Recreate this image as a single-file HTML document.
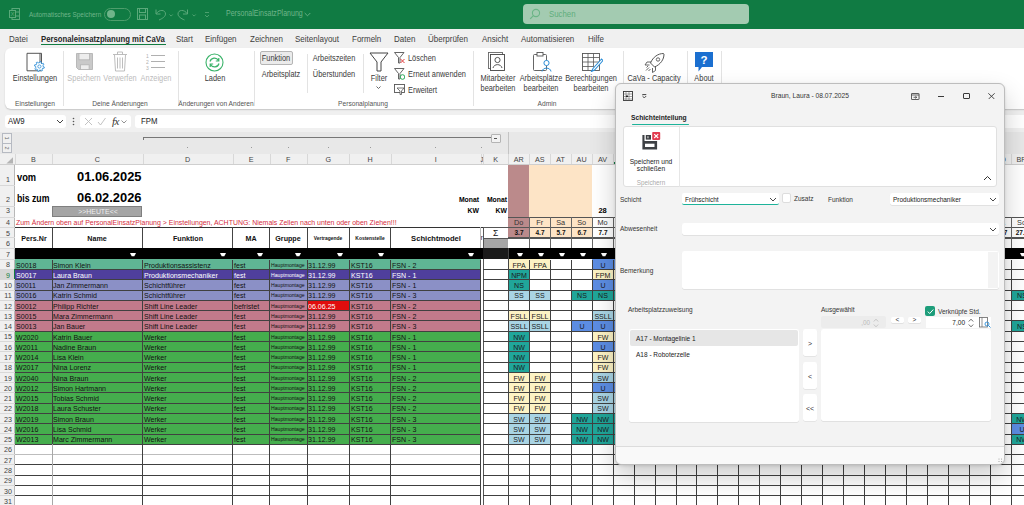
<!DOCTYPE html><html><head><meta charset="utf-8"><style>
html,body{margin:0;padding:0;width:1024px;height:505px;overflow:hidden;background:#fff;font-family:"Liberation Sans",sans-serif;}
div{box-sizing:border-box;}
</style></head><body><div style="position:relative;width:1024px;height:505px;overflow:hidden;">
<div style="position:absolute;left:0.00px;top:0.00px;width:1024.00px;height:28.60px;background:#107b43;"></div>
<div style="position:absolute;left:522.60px;top:4.20px;width:226.80px;height:19.60px;background:#a3cbb1;border-radius:4px;"></div>
<div style="position:absolute;left:548.50px;top:14.20px;white-space:nowrap;font-size:8.5px;line-height:1;color:#5fae7c;font-weight:normal;transform:translateY(-50%) scaleX(0.92);transform-origin:0 50%;">Suchen</div>
<svg style="position:absolute;left:529px;top:8px" width="12" height="12" viewBox="0 0 12 12"><circle cx="7" cy="5" r="3.6" fill="none" stroke="#6ab586" stroke-width="1.1"/><line x1="4.4" y1="7.6" x2="1.2" y2="10.8" stroke="#6ab586" stroke-width="1.2"/></svg>
<svg style="position:absolute;left:9px;top:8px" width="11" height="12" viewBox="0 0 11 12"><rect x="3" y="0.5" width="7.5" height="11" fill="none" stroke="#5aa97a" stroke-width="1"/><line x1="3" y1="4" x2="10.5" y2="4" stroke="#5aa97a"/><line x1="3" y1="8" x2="10.5" y2="8" stroke="#5aa97a"/><rect x="0.5" y="2.5" width="6" height="7" fill="#127c41" stroke="#5aa97a"/><text x="1.6" y="8.4" font-size="6" fill="#5aa97a" font-family="Liberation Sans">X</text></svg>
<div style="position:absolute;left:29.00px;top:14.00px;white-space:nowrap;font-size:7px;line-height:1;color:#6fb58a;font-weight:normal;transform:translateY(-50%) scaleX(0.91);transform-origin:0 50%;">Automatisches Speichern</div>
<div style="position:absolute;left:104.00px;top:7.50px;width:27.00px;height:13.00px;border:1px solid #4e9e6c;border-radius:7px;"></div>
<div style="position:absolute;left:106.50px;top:10.00px;width:8.00px;height:8.00px;background:#6fb58a;border-radius:50%;"></div>
<svg style="position:absolute;left:137px;top:8px" width="11" height="12" viewBox="0 0 11 12"><rect x="0.5" y="0.5" width="10" height="11" fill="none" stroke="#5aa97a"/><rect x="2.5" y="0.5" width="6" height="4" fill="none" stroke="#5aa97a"/><rect x="2.5" y="7" width="6" height="4.5" fill="none" stroke="#5aa97a"/></svg>
<svg style="position:absolute;left:154px;top:8px" width="60" height="13" viewBox="0 0 60 13"><path d="M2 1.5 V6 H6.5" fill="none" stroke="#5aa97a" stroke-width="1"/><path d="M2.3 5.7 C5 1.2 11.5 1.5 11.5 6 C11.5 8.5 8.5 10.5 5 12" fill="none" stroke="#5aa97a" stroke-width="1"/><path d="M15.5 6.5 l1.6 1.6 l1.6 -1.6" fill="none" stroke="#5aa97a" stroke-width="0.8"/><path d="M33.5 1.5 V6 H29" fill="none" stroke="#5aa97a" stroke-width="1"/><path d="M33.2 5.7 C30.5 1.2 24 1.5 24 6 C24 8.5 27 10.5 30.5 12" fill="none" stroke="#5aa97a" stroke-width="1"/><path d="M38.5 6.5 l1.6 1.6 l1.6 -1.6" fill="none" stroke="#5aa97a" stroke-width="0.8"/><path d="M51 4.5 h4 M51 7 l2 2 l2 -2" fill="none" stroke="#5aa97a" stroke-width="0.8"/></svg>
<div style="position:absolute;left:225.80px;top:14.30px;white-space:nowrap;font-size:8.2px;line-height:1;color:#6fb58a;font-weight:normal;transform:translateY(-50%) scaleX(0.86);transform-origin:0 50%;">PersonalEinsatzPlanung</div>
<svg style="position:absolute;left:304px;top:12px" width="7" height="5" viewBox="0 0 7 5"><path d="M0.7 1 l2.8 2.8 l2.8 -2.8" fill="none" stroke="#6fb58a" stroke-width="0.9"/></svg>
<div style="position:absolute;left:0.00px;top:28.60px;width:1024.00px;height:19.40px;background:#f0f0f0;"></div>
<div style="position:absolute;left:9.00px;top:38.50px;white-space:nowrap;font-size:8.6px;line-height:1;color:#3e3e3e;font-weight:normal;transform:translateY(-50%) scaleX(0.93);transform-origin:0 50%;">Datei</div>
<div style="position:absolute;left:41.00px;top:38.50px;white-space:nowrap;font-size:8.6px;line-height:1;color:#262626;font-weight:bold;transform:translateY(-50%) scaleX(0.9);transform-origin:0 50%;">Personaleinsatzplanung mit CaVa</div>
<div style="position:absolute;left:41.00px;top:43.50px;width:124.50px;height:1.40px;background:#127c41;"></div>
<div style="position:absolute;left:176.00px;top:38.50px;white-space:nowrap;font-size:8.6px;line-height:1;color:#3e3e3e;font-weight:normal;transform:translateY(-50%) scaleX(0.93);transform-origin:0 50%;">Start</div>
<div style="position:absolute;left:205.00px;top:38.50px;white-space:nowrap;font-size:8.6px;line-height:1;color:#3e3e3e;font-weight:normal;transform:translateY(-50%) scaleX(0.93);transform-origin:0 50%;">Einfügen</div>
<div style="position:absolute;left:250.00px;top:38.50px;white-space:nowrap;font-size:8.6px;line-height:1;color:#3e3e3e;font-weight:normal;transform:translateY(-50%) scaleX(0.93);transform-origin:0 50%;">Zeichnen</div>
<div style="position:absolute;left:295.00px;top:38.50px;white-space:nowrap;font-size:8.6px;line-height:1;color:#3e3e3e;font-weight:normal;transform:translateY(-50%) scaleX(0.93);transform-origin:0 50%;">Seitenlayout</div>
<div style="position:absolute;left:352.00px;top:38.50px;white-space:nowrap;font-size:8.6px;line-height:1;color:#3e3e3e;font-weight:normal;transform:translateY(-50%) scaleX(0.93);transform-origin:0 50%;">Formeln</div>
<div style="position:absolute;left:394.00px;top:38.50px;white-space:nowrap;font-size:8.6px;line-height:1;color:#3e3e3e;font-weight:normal;transform:translateY(-50%) scaleX(0.93);transform-origin:0 50%;">Daten</div>
<div style="position:absolute;left:428.00px;top:38.50px;white-space:nowrap;font-size:8.6px;line-height:1;color:#3e3e3e;font-weight:normal;transform:translateY(-50%) scaleX(0.93);transform-origin:0 50%;">Überprüfen</div>
<div style="position:absolute;left:482.00px;top:38.50px;white-space:nowrap;font-size:8.6px;line-height:1;color:#3e3e3e;font-weight:normal;transform:translateY(-50%) scaleX(0.93);transform-origin:0 50%;">Ansicht</div>
<div style="position:absolute;left:521.00px;top:38.50px;white-space:nowrap;font-size:8.6px;line-height:1;color:#3e3e3e;font-weight:normal;transform:translateY(-50%) scaleX(0.93);transform-origin:0 50%;">Automatisieren</div>
<div style="position:absolute;left:588.00px;top:38.50px;white-space:nowrap;font-size:8.6px;line-height:1;color:#3e3e3e;font-weight:normal;transform:translateY(-50%) scaleX(0.93);transform-origin:0 50%;">Hilfe</div>
<div style="position:absolute;left:0.00px;top:48.00px;width:1024.00px;height:84.50px;background:#f0f0f0;"></div>
<div style="position:absolute;left:5.00px;top:47.80px;width:1030.00px;height:61.50px;background:#fff;border-radius:6px;box-shadow:0 1px 1.5px rgba(0,0,0,0.18);"></div>
<svg style="position:absolute;left:26px;top:52px" width="20" height="20" viewBox="0 0 20 20"><path d="M1 1.3 H15.5 V18.8 H1 Z" fill="none" stroke="#444" stroke-width="0.9"/><line x1="14" y1="1.3" x2="14" y2="18.8" stroke="#444" stroke-width="0.9"/><path d="M17.10 14.50 L18.37 15.09 L18.09 16.23 L16.70 16.18 L16.02 17.12 L16.50 18.43 L15.49 19.04 L14.54 18.02 L13.40 18.20 L12.81 19.47 L11.67 19.19 L11.72 17.80 L10.78 17.12 L9.47 17.60 L8.86 16.59 L9.88 15.64 L9.70 14.50 L8.43 13.91 L8.71 12.77 L10.10 12.82 L10.78 11.88 L10.30 10.57 L11.31 9.96 L12.26 10.98 L13.40 10.80 L13.99 9.53 L15.13 9.81 L15.08 11.20 L16.02 11.88 L17.33 11.40 L17.94 12.41 L16.92 13.36 Z" fill="#fff" stroke="#2e8fd8" stroke-width="0.9"/><circle cx="13.4" cy="14.5" r="1.6" fill="none" stroke="#2e8fd8" stroke-width="0.8"/></svg>
<div style="position:absolute;left:35.00px;top:78.30px;white-space:nowrap;font-size:8.7px;line-height:1;color:#3a3a3a;font-weight:normal;transform:translate(-50%,-50%) scaleX(0.85);">Einstellungen</div>
<div style="position:absolute;left:34.50px;top:103.00px;white-space:nowrap;font-size:7px;line-height:1;color:#555;font-weight:normal;transform:translate(-50%,-50%) scaleX(0.95);">Einstellungen</div>
<div style="position:absolute;left:62.50px;top:51.00px;width:1.00px;height:55.00px;background:#e3e3e3;"></div>
<svg style="position:absolute;left:76px;top:52.5px" width="17.5" height="17.5" viewBox="0 0 17.5 17.5"><path d="M0.5 0.5 H16.5 V16.5 H2.5 L0.5 14.5 Z" fill="#c9c9c9" stroke="#b3b3b3" stroke-width="0.9"/><rect x="3" y="0.5" width="10.6" height="6.3" fill="#ededed" stroke="#b3b3b3" stroke-width="0.8"/><rect x="4.5" y="11.8" width="8.6" height="4.7" fill="#ededed" stroke="#b3b3b3" stroke-width="0.8"/></svg>
<svg style="position:absolute;left:112px;top:51px" width="16" height="21" viewBox="0 0 16 21"><path d="M1 3.5 H15 M5.5 3.5 V1 H10.5 V3.5 M2.5 4 L3.5 20 H12.5 L13.5 4 M5.5 6.5 V17.5 M8 6.5 V17.5 M10.5 6.5 V17.5" fill="none" stroke="#b5b5b5" stroke-width="0.9"/></svg>
<svg style="position:absolute;left:146px;top:53px" width="20" height="17" viewBox="0 0 20 17"><text x="0" y="5" font-size="5" fill="#b0b0b0" font-family="Liberation Sans">1</text><text x="0" y="11" font-size="5" fill="#b0b0b0" font-family="Liberation Sans">2</text><text x="0" y="17" font-size="5" fill="#b0b0b0" font-family="Liberation Sans">3</text><path d="M5 2.5 H19 M5 8.5 H19 M5 14.5 H19" stroke="#b0b0b0" stroke-width="1"/></svg>
<div style="position:absolute;left:84.00px;top:78.30px;white-space:nowrap;font-size:8.7px;line-height:1;color:#bbb;font-weight:normal;transform:translate(-50%,-50%) scaleX(0.85);">Speichern</div>
<div style="position:absolute;left:120.00px;top:78.30px;white-space:nowrap;font-size:8.7px;line-height:1;color:#bbb;font-weight:normal;transform:translate(-50%,-50%) scaleX(0.85);">Verwerfen</div>
<div style="position:absolute;left:155.50px;top:78.30px;white-space:nowrap;font-size:8.7px;line-height:1;color:#bbb;font-weight:normal;transform:translate(-50%,-50%) scaleX(0.85);">Anzeigen</div>
<div style="position:absolute;left:119.50px;top:103.00px;white-space:nowrap;font-size:7px;line-height:1;color:#555;font-weight:normal;transform:translate(-50%,-50%) scaleX(0.95);">Deine Änderungen</div>
<div style="position:absolute;left:177.50px;top:51.00px;width:1.00px;height:55.00px;background:#e3e3e3;"></div>
<svg style="position:absolute;left:205px;top:53px" width="19" height="19" viewBox="0 0 19 19"><circle cx="9.5" cy="9.5" r="8.5" fill="none" stroke="#3bb36a" stroke-width="1.1"/><path d="M5 8.5 A4.6 4.6 0 0 1 13.5 7.5 M13.8 5 V8 H10.8" fill="none" stroke="#3bb36a" stroke-width="1.2"/><path d="M14 10.5 A4.6 4.6 0 0 1 5.5 11.5 M5.2 14 V11 H8.2" fill="none" stroke="#3bb36a" stroke-width="1.2"/></svg>
<div style="position:absolute;left:215.00px;top:78.30px;white-space:nowrap;font-size:8.7px;line-height:1;color:#3a3a3a;font-weight:normal;transform:translate(-50%,-50%) scaleX(0.85);">Laden</div>
<div style="position:absolute;left:216.00px;top:103.00px;white-space:nowrap;font-size:7px;line-height:1;color:#555;font-weight:normal;transform:translate(-50%,-50%) scaleX(0.95);">Änderungen von Anderen</div>
<div style="position:absolute;left:254.00px;top:51.00px;width:1.00px;height:55.00px;background:#e3e3e3;"></div>
<div style="position:absolute;left:259.50px;top:50.50px;width:33.50px;height:14.50px;background:#ebebeb;border:1px solid #b5b5b5;border-radius:2px;"></div>
<div style="position:absolute;left:276.00px;top:57.70px;white-space:nowrap;font-size:8.7px;line-height:1;color:#3a3a3a;font-weight:normal;transform:translate(-50%,-50%) scaleX(0.85);">Funktion</div>
<div style="position:absolute;left:281.00px;top:73.80px;white-space:nowrap;font-size:8.7px;line-height:1;color:#3a3a3a;font-weight:normal;transform:translate(-50%,-50%) scaleX(0.85);">Arbeitsplatz</div>
<div style="position:absolute;left:307.00px;top:54.00px;width:1.00px;height:39.00px;background:#e3e3e3;"></div>
<div style="position:absolute;left:334.00px;top:57.70px;white-space:nowrap;font-size:8.7px;line-height:1;color:#3a3a3a;font-weight:normal;transform:translate(-50%,-50%) scaleX(0.85);">Arbeitszeiten</div>
<div style="position:absolute;left:334.00px;top:73.80px;white-space:nowrap;font-size:8.7px;line-height:1;color:#3a3a3a;font-weight:normal;transform:translate(-50%,-50%) scaleX(0.85);">Überstunden</div>
<div style="position:absolute;left:363.00px;top:54.00px;width:1.00px;height:39.00px;background:#e3e3e3;"></div>
<svg style="position:absolute;left:369px;top:52px" width="20" height="20" viewBox="0 0 20 20"><path d="M1 1 H19 L12 10 V19 H8 V10 Z" fill="none" stroke="#444" stroke-width="1"/></svg>
<div style="position:absolute;left:378.50px;top:78.20px;white-space:nowrap;font-size:8.7px;line-height:1;color:#3a3a3a;font-weight:normal;transform:translate(-50%,-50%) scaleX(0.85);">Filter</div>
<svg style="position:absolute;left:376px;top:86px" width="5" height="4" viewBox="0 0 5 4"><path d="M0.5 0.5 l2 2 l2 -2" fill="none" stroke="#555" stroke-width="0.9"/></svg>
<svg style="position:absolute;left:394px;top:52px" width="11" height="12" viewBox="0 0 11 12"><path d="M0.5 0.5 H10 L6 5.5 V11 H4.5 V5.5 Z" fill="none" stroke="#555" stroke-width="0.9"/><path d="M6.5 7 l4 4 M10.5 7 l-4 4" stroke="#e03c3c" stroke-width="1"/></svg>
<svg style="position:absolute;left:394px;top:68px" width="11" height="12" viewBox="0 0 11 12"><path d="M0.5 0.5 H10 L6 5.5 V11 H4.5 V5.5 Z" fill="none" stroke="#555" stroke-width="0.9"/><circle cx="8.5" cy="9" r="2.3" fill="none" stroke="#2aa85a" stroke-width="1"/></svg>
<svg style="position:absolute;left:394px;top:84px" width="11" height="11" viewBox="0 0 11 11"><rect x="0.5" y="0.5" width="10" height="8" fill="none" stroke="#555" stroke-width="0.9"/><path d="M3 4 H10 L7.5 7 V10.5 H6 V7 Z" fill="#fff" stroke="#555" stroke-width="0.8"/></svg>
<div style="position:absolute;left:407.60px;top:57.80px;white-space:nowrap;font-size:8.7px;line-height:1;color:#3a3a3a;font-weight:normal;transform:translateY(-50%) scaleX(0.85);transform-origin:0 50%;">Löschen</div>
<div style="position:absolute;left:407.60px;top:74.00px;white-space:nowrap;font-size:8.7px;line-height:1;color:#3a3a3a;font-weight:normal;transform:translateY(-50%) scaleX(0.85);transform-origin:0 50%;">Erneut anwenden</div>
<div style="position:absolute;left:407.60px;top:90.30px;white-space:nowrap;font-size:8.7px;line-height:1;color:#3a3a3a;font-weight:normal;transform:translateY(-50%) scaleX(0.85);transform-origin:0 50%;">Erweitert</div>
<div style="position:absolute;left:363.00px;top:103.00px;white-space:nowrap;font-size:7px;line-height:1;color:#555;font-weight:normal;transform:translate(-50%,-50%) scaleX(0.95);">Personalplanung</div>
<div style="position:absolute;left:473.00px;top:51.00px;width:1.00px;height:55.00px;background:#e3e3e3;"></div>
<svg style="position:absolute;left:488px;top:52px" width="17" height="19" viewBox="0 0 17 19"><rect x="0.5" y="0.5" width="14" height="16" fill="none" stroke="#666" stroke-width="0.9"/><rect x="2.5" y="2.5" width="14" height="16" fill="#fff" stroke="#444" stroke-width="0.9"/><circle cx="9.5" cy="8" r="2.6" fill="none" stroke="#444" stroke-width="0.9"/><path d="M5 16 C6 11.5 13 11.5 14 16" fill="none" stroke="#444" stroke-width="0.9"/></svg>
<div style="position:absolute;left:497.50px;top:78.20px;white-space:nowrap;font-size:8.7px;line-height:1;color:#3a3a3a;font-weight:normal;transform:translate(-50%,-50%) scaleX(0.85);">Mitarbeiter</div>
<div style="position:absolute;left:497.50px;top:88.00px;white-space:nowrap;font-size:8.7px;line-height:1;color:#3a3a3a;font-weight:normal;transform:translate(-50%,-50%) scaleX(0.85);">bearbeiten</div>
<svg style="position:absolute;left:533px;top:52px" width="20" height="20" viewBox="0 0 20 20"><rect x="0.5" y="2.5" width="13" height="16" rx="1" fill="none" stroke="#555" stroke-width="0.9"/><rect x="4" y="0.5" width="6" height="3.5" fill="#fff" stroke="#555" stroke-width="0.9"/><circle cx="13.5" cy="11" r="2.6" fill="#fff" stroke="#2e8fd8" stroke-width="1"/><path d="M9 19.5 C9.5 15 17.5 15 18 19.5" fill="none" stroke="#2e8fd8" stroke-width="1"/></svg>
<div style="position:absolute;left:541.00px;top:78.20px;white-space:nowrap;font-size:8.7px;line-height:1;color:#3a3a3a;font-weight:normal;transform:translate(-50%,-50%) scaleX(0.85);">Arbeitsplätze</div>
<div style="position:absolute;left:541.00px;top:88.00px;white-space:nowrap;font-size:8.7px;line-height:1;color:#3a3a3a;font-weight:normal;transform:translate(-50%,-50%) scaleX(0.85);">bearbeiten</div>
<svg style="position:absolute;left:582px;top:53px" width="21" height="19" viewBox="0 0 21 19"><rect x="0.5" y="0.5" width="17" height="17" fill="none" stroke="#555" stroke-width="0.9"/><path d="M0.5 4.5 H17.5 M0.5 9 H17.5 M0.5 13.5 H12 M6 0.5 V17.5 M11.5 0.5 V13" stroke="#555" stroke-width="0.8"/><path d="M19.5 6 L11 15.5 L9.5 18.5 L12.5 17 L21 7.5 Z" fill="#fff" stroke="#2e8fd8" stroke-width="1.1"/></svg>
<div style="position:absolute;left:591.00px;top:78.20px;white-space:nowrap;font-size:8.7px;line-height:1;color:#3a3a3a;font-weight:normal;transform:translate(-50%,-50%) scaleX(0.85);">Berechtigungen</div>
<div style="position:absolute;left:591.00px;top:88.00px;white-space:nowrap;font-size:8.7px;line-height:1;color:#3a3a3a;font-weight:normal;transform:translate(-50%,-50%) scaleX(0.85);">bearbeiten</div>
<div style="position:absolute;left:547.00px;top:103.00px;white-space:nowrap;font-size:7px;line-height:1;color:#555;font-weight:normal;transform:translate(-50%,-50%) scaleX(0.95);">Admin</div>
<div style="position:absolute;left:623.00px;top:51.00px;width:1.00px;height:55.00px;background:#e3e3e3;"></div>
<svg style="position:absolute;left:644px;top:52px" width="22" height="22" viewBox="0 0 22 22"><path d="M19.5 1.5 C14 1.5 9 5 6.5 11 L10.5 15 C16.5 12.5 20 7.5 20 2 Z" fill="none" stroke="#555" stroke-width="1"/><circle cx="14" cy="7.5" r="1.7" fill="none" stroke="#555" stroke-width="0.9"/><path d="M7 10 L3 10 L1 13 L5.5 13 M11.5 14.5 L11.5 18.5 L8.5 20.5 L8.5 16 M5 15.5 L2 18.5 M6.5 17 L4.5 19 M4 14 L2.5 15.5" fill="none" stroke="#555" stroke-width="0.9"/></svg>
<div style="position:absolute;left:654.00px;top:78.20px;white-space:nowrap;font-size:8.7px;line-height:1;color:#3a3a3a;font-weight:normal;transform:translate(-50%,-50%) scaleX(0.85);">CaVa - Capacity</div>
<div style="position:absolute;left:686.50px;top:51.00px;width:1.00px;height:55.00px;background:#e3e3e3;"></div>
<svg style="position:absolute;left:695px;top:52px" width="18" height="20" viewBox="0 0 18 20"><path d="M0 0 H18 V15 H7 L3.5 19.5 V15 H0 Z" fill="#1b6fd0"/><text x="9" y="12" font-size="11.5" font-weight="bold" fill="#fff" text-anchor="middle" font-family="Liberation Sans">?</text></svg>
<div style="position:absolute;left:704.00px;top:78.20px;white-space:nowrap;font-size:8.7px;line-height:1;color:#3a3a3a;font-weight:normal;transform:translate(-50%,-50%) scaleX(0.85);">About</div>
<div style="position:absolute;left:721.00px;top:51.00px;width:1.00px;height:55.00px;background:#e3e3e3;"></div>
<div style="position:absolute;left:5.00px;top:114.70px;width:61.00px;height:13.40px;background:#fff;border-radius:3px;"></div>
<div style="position:absolute;left:8.00px;top:121.50px;white-space:nowrap;font-size:8.2px;line-height:1;color:#222;font-weight:normal;transform:translateY(-50%) scaleX(0.95);transform-origin:0 50%;">AW9</div>
<svg style="position:absolute;left:56px;top:119px" width="8" height="5" viewBox="0 0 8 5"><path d="M1 1 l3 3 l3 -3" fill="none" stroke="#444" stroke-width="1"/></svg>
<svg style="position:absolute;left:72px;top:117px" width="3" height="10" viewBox="0 0 3 10"><circle cx="1.5" cy="1.5" r="0.8" fill="#555"/><circle cx="1.5" cy="4.5" r="0.8" fill="#555"/><circle cx="1.5" cy="7.5" r="0.8" fill="#555"/></svg>
<div style="position:absolute;left:79.80px;top:114.70px;width:51.60px;height:13.40px;background:#fff;border-radius:3px;"></div>
<svg style="position:absolute;left:84px;top:117px" width="46" height="10" viewBox="0 0 46 10"><path d="M1 1 l7 7 M8 1 l-7 7" stroke="#bbb" stroke-width="0.9"/><path d="M14 5 l2.5 3 l5 -7" fill="none" stroke="#bbb" stroke-width="0.9"/><path d="M37.5 3.5 l2.5 2.5 l2.5 -2.5" fill="none" stroke="#777" stroke-width="0.8"/></svg>
<div style="position:absolute;left:112.00px;top:121.20px;white-space:nowrap;font-size:11px;line-height:1;color:#333;font-weight:normal;transform:translateY(-50%) scaleX(1.0);transform-origin:0 50%;font-family:'Liberation Serif',serif;letter-spacing:-0.5px;"><i>fx</i></div>
<div style="position:absolute;left:135.00px;top:114.70px;width:900.00px;height:13.40px;background:#fff;border-radius:3px;"></div>
<div style="position:absolute;left:141.00px;top:121.50px;white-space:nowrap;font-size:8.2px;line-height:1;color:#222;font-weight:normal;transform:translateY(-50%) scaleX(0.95);transform-origin:0 50%;">FPM</div>
<div style="position:absolute;left:0.00px;top:132.30px;width:1024.00px;height:21.50px;background:#e8e8e8;"></div>
<div style="position:absolute;left:2.20px;top:133.10px;width:9.80px;height:19.80px;border:1px solid #b6bac2;background:#f0f0f0;"></div>
<div style="position:absolute;left:2.70px;top:142.90px;width:8.80px;height:0.90px;background:#b6bac2;"></div>
<svg style="position:absolute;left:2.2px;top:133.1px" width="10" height="20" viewBox="0 0 10 20"><text transform="translate(4.9 5) rotate(90)" x="0" y="0" font-size="5.5" fill="#666" font-family="Liberation Sans" text-anchor="middle" dominant-baseline="central">1</text><text transform="translate(4.9 15) rotate(90)" x="0" y="0" font-size="5.5" fill="#666" font-family="Liberation Sans" text-anchor="middle" dominant-baseline="central">2</text></svg>
<div style="position:absolute;left:143.00px;top:137.20px;width:348.00px;height:1.00px;background:#777;"></div>
<div style="position:absolute;left:143.00px;top:137.20px;width:1.00px;height:3.00px;background:#777;"></div>
<div style="position:absolute;left:490.50px;top:133.60px;width:10.00px;height:9.70px;border:1px solid #b4b4b4;background:#f2f2f2;border-radius:1px;"></div>
<div style="position:absolute;left:493.60px;top:138.10px;width:3.80px;height:0.80px;background:#555;"></div>
<div style="position:absolute;left:508.00px;top:132.30px;width:1.00px;height:21.50px;background:#c4c4c4;"></div>
<div style="position:absolute;left:0.00px;top:153.90px;width:1024.00px;height:11.00px;background:#f0f0f0;border-bottom:1px solid #cfcfcf;"></div>
<div style="position:absolute;left:613.05px;top:162.40px;width:20.95px;height:2.00px;background:#127c41;"></div>
<svg style="position:absolute;left:6px;top:156.5px" width="7.5" height="7" viewBox="0 0 7.5 7"><path d="M7 0.2 V6.6 H0.4 Z" fill="#b4b4b4"/></svg>
<div style="position:absolute;left:14.70px;top:153.90px;width:0.80px;height:10.50px;background:#d8d8d8;"></div>
<div style="position:absolute;left:33.50px;top:159.90px;white-space:nowrap;font-size:7.2px;line-height:1;color:#444;font-weight:normal;transform:translate(-50%,-50%) scaleX(1.0);">B</div>
<div style="position:absolute;left:52.30px;top:153.90px;width:0.80px;height:10.50px;background:#d8d8d8;"></div>
<div style="position:absolute;left:97.45px;top:159.90px;white-space:nowrap;font-size:7.2px;line-height:1;color:#444;font-weight:normal;transform:translate(-50%,-50%) scaleX(1.0);">C</div>
<div style="position:absolute;left:142.60px;top:153.90px;width:0.80px;height:10.50px;background:#d8d8d8;"></div>
<div style="position:absolute;left:187.10px;top:146.80px;width:1.00px;height:1.00px;background:#9a9a9a;"></div>
<div style="position:absolute;left:187.60px;top:159.90px;white-space:nowrap;font-size:7.2px;line-height:1;color:#444;font-weight:normal;transform:translate(-50%,-50%) scaleX(1.0);">D</div>
<div style="position:absolute;left:232.60px;top:153.90px;width:0.80px;height:10.50px;background:#d8d8d8;"></div>
<div style="position:absolute;left:250.55px;top:146.80px;width:1.00px;height:1.00px;background:#9a9a9a;"></div>
<div style="position:absolute;left:251.05px;top:159.90px;white-space:nowrap;font-size:7.2px;line-height:1;color:#444;font-weight:normal;transform:translate(-50%,-50%) scaleX(1.0);">E</div>
<div style="position:absolute;left:269.50px;top:153.90px;width:0.80px;height:10.50px;background:#d8d8d8;"></div>
<div style="position:absolute;left:287.75px;top:146.80px;width:1.00px;height:1.00px;background:#9a9a9a;"></div>
<div style="position:absolute;left:288.25px;top:159.90px;white-space:nowrap;font-size:7.2px;line-height:1;color:#444;font-weight:normal;transform:translate(-50%,-50%) scaleX(1.0);">F</div>
<div style="position:absolute;left:307.00px;top:153.90px;width:0.80px;height:10.50px;background:#d8d8d8;"></div>
<div style="position:absolute;left:327.70px;top:146.80px;width:1.00px;height:1.00px;background:#9a9a9a;"></div>
<div style="position:absolute;left:328.20px;top:159.90px;white-space:nowrap;font-size:7.2px;line-height:1;color:#444;font-weight:normal;transform:translate(-50%,-50%) scaleX(1.0);">G</div>
<div style="position:absolute;left:349.40px;top:153.90px;width:0.80px;height:10.50px;background:#d8d8d8;"></div>
<div style="position:absolute;left:369.50px;top:146.80px;width:1.00px;height:1.00px;background:#9a9a9a;"></div>
<div style="position:absolute;left:370.00px;top:159.90px;white-space:nowrap;font-size:7.2px;line-height:1;color:#444;font-weight:normal;transform:translate(-50%,-50%) scaleX(1.0);">H</div>
<div style="position:absolute;left:390.60px;top:153.90px;width:0.80px;height:10.50px;background:#d8d8d8;"></div>
<div style="position:absolute;left:435.15px;top:146.80px;width:1.00px;height:1.00px;background:#9a9a9a;"></div>
<div style="position:absolute;left:435.65px;top:159.90px;white-space:nowrap;font-size:7.2px;line-height:1;color:#444;font-weight:normal;transform:translate(-50%,-50%) scaleX(1.0);">I</div>
<div style="position:absolute;left:480.70px;top:153.90px;width:0.80px;height:10.50px;background:#d8d8d8;"></div>
<div style="position:absolute;left:481.35px;top:146.80px;width:1.00px;height:1.00px;background:#9a9a9a;"></div>
<div style="position:absolute;left:481.85px;top:159.90px;white-space:nowrap;font-size:6.5px;line-height:1;color:#444;font-weight:normal;transform:translate(-50%,-50%) scaleX(1.0);overflow:hidden;">J</div>
<div style="position:absolute;left:483.00px;top:153.90px;width:0.80px;height:10.50px;background:#d8d8d8;"></div>
<div style="position:absolute;left:495.65px;top:159.90px;white-space:nowrap;font-size:7.2px;line-height:1;color:#444;font-weight:normal;transform:translate(-50%,-50%) scaleX(1.0);">K</div>
<div style="position:absolute;left:508.30px;top:153.90px;width:0.80px;height:10.50px;background:#d8d8d8;"></div>
<div style="position:absolute;left:518.77px;top:159.90px;white-space:nowrap;font-size:7.2px;line-height:1;color:#444;font-weight:normal;transform:translate(-50%,-50%) scaleX(1.0);">AR</div>
<div style="position:absolute;left:529.25px;top:153.90px;width:0.80px;height:10.50px;background:#d8d8d8;"></div>
<div style="position:absolute;left:539.73px;top:159.90px;white-space:nowrap;font-size:7.2px;line-height:1;color:#444;font-weight:normal;transform:translate(-50%,-50%) scaleX(1.0);">AS</div>
<div style="position:absolute;left:550.20px;top:153.90px;width:0.80px;height:10.50px;background:#d8d8d8;"></div>
<div style="position:absolute;left:560.67px;top:159.90px;white-space:nowrap;font-size:7.2px;line-height:1;color:#444;font-weight:normal;transform:translate(-50%,-50%) scaleX(1.0);">AT</div>
<div style="position:absolute;left:571.15px;top:153.90px;width:0.80px;height:10.50px;background:#d8d8d8;"></div>
<div style="position:absolute;left:581.62px;top:159.90px;white-space:nowrap;font-size:7.2px;line-height:1;color:#444;font-weight:normal;transform:translate(-50%,-50%) scaleX(1.0);">AU</div>
<div style="position:absolute;left:592.10px;top:153.90px;width:0.80px;height:10.50px;background:#d8d8d8;"></div>
<div style="position:absolute;left:602.58px;top:159.90px;white-space:nowrap;font-size:7.2px;line-height:1;color:#444;font-weight:normal;transform:translate(-50%,-50%) scaleX(1.0);">AV</div>
<div style="position:absolute;left:613.05px;top:153.90px;width:0.80px;height:10.50px;background:#d8d8d8;"></div>
<div style="position:absolute;left:623.52px;top:159.90px;white-space:nowrap;font-size:7.2px;line-height:1;color:#444;font-weight:normal;transform:translate(-50%,-50%) scaleX(1.0);">AW</div>
<div style="position:absolute;left:634.00px;top:153.90px;width:0.80px;height:10.50px;background:#d8d8d8;"></div>
<div style="position:absolute;left:644.48px;top:159.90px;white-space:nowrap;font-size:7.2px;line-height:1;color:#444;font-weight:normal;transform:translate(-50%,-50%) scaleX(1.0);">AX</div>
<div style="position:absolute;left:654.95px;top:153.90px;width:0.80px;height:10.50px;background:#d8d8d8;"></div>
<div style="position:absolute;left:665.42px;top:159.90px;white-space:nowrap;font-size:7.2px;line-height:1;color:#444;font-weight:normal;transform:translate(-50%,-50%) scaleX(1.0);">AY</div>
<div style="position:absolute;left:675.90px;top:153.90px;width:0.80px;height:10.50px;background:#d8d8d8;"></div>
<div style="position:absolute;left:686.38px;top:159.90px;white-space:nowrap;font-size:7.2px;line-height:1;color:#444;font-weight:normal;transform:translate(-50%,-50%) scaleX(1.0);">AZ</div>
<div style="position:absolute;left:696.85px;top:153.90px;width:0.80px;height:10.50px;background:#d8d8d8;"></div>
<div style="position:absolute;left:707.33px;top:159.90px;white-space:nowrap;font-size:7.2px;line-height:1;color:#444;font-weight:normal;transform:translate(-50%,-50%) scaleX(1.0);">BC</div>
<div style="position:absolute;left:717.80px;top:153.90px;width:0.80px;height:10.50px;background:#d8d8d8;"></div>
<div style="position:absolute;left:728.27px;top:159.90px;white-space:nowrap;font-size:7.2px;line-height:1;color:#444;font-weight:normal;transform:translate(-50%,-50%) scaleX(1.0);">BD</div>
<div style="position:absolute;left:738.75px;top:153.90px;width:0.80px;height:10.50px;background:#d8d8d8;"></div>
<div style="position:absolute;left:749.23px;top:159.90px;white-space:nowrap;font-size:7.2px;line-height:1;color:#444;font-weight:normal;transform:translate(-50%,-50%) scaleX(1.0);">BE</div>
<div style="position:absolute;left:759.70px;top:153.90px;width:0.80px;height:10.50px;background:#d8d8d8;"></div>
<div style="position:absolute;left:770.17px;top:159.90px;white-space:nowrap;font-size:7.2px;line-height:1;color:#444;font-weight:normal;transform:translate(-50%,-50%) scaleX(1.0);">BF</div>
<div style="position:absolute;left:780.65px;top:153.90px;width:0.80px;height:10.50px;background:#d8d8d8;"></div>
<div style="position:absolute;left:791.12px;top:159.90px;white-space:nowrap;font-size:7.2px;line-height:1;color:#444;font-weight:normal;transform:translate(-50%,-50%) scaleX(1.0);">BG</div>
<div style="position:absolute;left:801.60px;top:153.90px;width:0.80px;height:10.50px;background:#d8d8d8;"></div>
<div style="position:absolute;left:812.08px;top:159.90px;white-space:nowrap;font-size:7.2px;line-height:1;color:#444;font-weight:normal;transform:translate(-50%,-50%) scaleX(1.0);">BH</div>
<div style="position:absolute;left:822.55px;top:153.90px;width:0.80px;height:10.50px;background:#d8d8d8;"></div>
<div style="position:absolute;left:833.02px;top:159.90px;white-space:nowrap;font-size:7.2px;line-height:1;color:#444;font-weight:normal;transform:translate(-50%,-50%) scaleX(1.0);">BI</div>
<div style="position:absolute;left:843.50px;top:153.90px;width:0.80px;height:10.50px;background:#d8d8d8;"></div>
<div style="position:absolute;left:853.98px;top:159.90px;white-space:nowrap;font-size:7.2px;line-height:1;color:#444;font-weight:normal;transform:translate(-50%,-50%) scaleX(1.0);">BJ</div>
<div style="position:absolute;left:864.45px;top:153.90px;width:0.80px;height:10.50px;background:#d8d8d8;"></div>
<div style="position:absolute;left:874.92px;top:159.90px;white-space:nowrap;font-size:7.2px;line-height:1;color:#444;font-weight:normal;transform:translate(-50%,-50%) scaleX(1.0);">BK</div>
<div style="position:absolute;left:885.40px;top:153.90px;width:0.80px;height:10.50px;background:#d8d8d8;"></div>
<div style="position:absolute;left:895.88px;top:159.90px;white-space:nowrap;font-size:7.2px;line-height:1;color:#444;font-weight:normal;transform:translate(-50%,-50%) scaleX(1.0);">BL</div>
<div style="position:absolute;left:906.35px;top:153.90px;width:0.80px;height:10.50px;background:#d8d8d8;"></div>
<div style="position:absolute;left:916.83px;top:159.90px;white-space:nowrap;font-size:7.2px;line-height:1;color:#444;font-weight:normal;transform:translate(-50%,-50%) scaleX(1.0);">BM</div>
<div style="position:absolute;left:927.30px;top:153.90px;width:0.80px;height:10.50px;background:#d8d8d8;"></div>
<div style="position:absolute;left:937.77px;top:159.90px;white-space:nowrap;font-size:7.2px;line-height:1;color:#444;font-weight:normal;transform:translate(-50%,-50%) scaleX(1.0);">BN</div>
<div style="position:absolute;left:948.25px;top:153.90px;width:0.80px;height:10.50px;background:#d8d8d8;"></div>
<div style="position:absolute;left:958.73px;top:159.90px;white-space:nowrap;font-size:7.2px;line-height:1;color:#444;font-weight:normal;transform:translate(-50%,-50%) scaleX(1.0);">BO</div>
<div style="position:absolute;left:969.20px;top:153.90px;width:0.80px;height:10.50px;background:#d8d8d8;"></div>
<div style="position:absolute;left:979.67px;top:159.90px;white-space:nowrap;font-size:7.2px;line-height:1;color:#444;font-weight:normal;transform:translate(-50%,-50%) scaleX(1.0);">BP</div>
<div style="position:absolute;left:990.15px;top:153.90px;width:0.80px;height:10.50px;background:#d8d8d8;"></div>
<div style="position:absolute;left:1000.62px;top:159.90px;white-space:nowrap;font-size:7.2px;line-height:1;color:#444;font-weight:normal;transform:translate(-50%,-50%) scaleX(1.0);">BQ</div>
<div style="position:absolute;left:1011.10px;top:153.90px;width:0.80px;height:10.50px;background:#d8d8d8;"></div>
<div style="position:absolute;left:1021.57px;top:159.90px;white-space:nowrap;font-size:7.2px;line-height:1;color:#444;font-weight:normal;transform:translate(-50%,-50%) scaleX(1.0);">BR</div>
<div style="position:absolute;left:1032.05px;top:153.90px;width:0.80px;height:10.50px;background:#d8d8d8;"></div>
<div style="position:absolute;left:1042.53px;top:159.90px;white-space:nowrap;font-size:7.2px;line-height:1;color:#444;font-weight:normal;transform:translate(-50%,-50%) scaleX(1.0);">BS</div>
<div style="position:absolute;left:1053.00px;top:153.90px;width:0.80px;height:10.50px;background:#d8d8d8;"></div>
<div style="position:absolute;left:1063.47px;top:159.90px;white-space:nowrap;font-size:7.2px;line-height:1;color:#444;font-weight:normal;transform:translate(-50%,-50%) scaleX(1.0);">BT</div>
<div style="position:absolute;left:1073.95px;top:153.90px;width:0.80px;height:10.50px;background:#d8d8d8;"></div>
<div style="position:absolute;left:1084.43px;top:159.90px;white-space:nowrap;font-size:7.2px;line-height:1;color:#444;font-weight:normal;transform:translate(-50%,-50%) scaleX(1.0);">BU</div>
<div style="position:absolute;left:0.00px;top:164.50px;width:14.70px;height:340.50px;background:#f0f0f0;border-right:1px solid #b8b8b8;"></div>
<div style="position:absolute;left:0.00px;top:184.80px;width:14.70px;height:0.80px;background:#d8d8d8;"></div>
<div style="position:absolute;left:7.50px;top:179.50px;white-space:nowrap;font-size:7.5px;line-height:1;color:#444;font-weight:normal;transform:translate(-50%,-50%) scaleX(0.95);">1</div>
<div style="position:absolute;left:0.00px;top:205.50px;width:14.70px;height:0.80px;background:#d8d8d8;"></div>
<div style="position:absolute;left:7.50px;top:200.25px;white-space:nowrap;font-size:7.5px;line-height:1;color:#444;font-weight:normal;transform:translate(-50%,-50%) scaleX(0.95);">2</div>
<div style="position:absolute;left:0.00px;top:216.90px;width:14.70px;height:0.80px;background:#d8d8d8;"></div>
<div style="position:absolute;left:7.50px;top:210.90px;white-space:nowrap;font-size:7.5px;line-height:1;color:#444;font-weight:normal;transform:translate(-50%,-50%) scaleX(0.95);">3</div>
<div style="position:absolute;left:0.00px;top:226.80px;width:14.70px;height:0.80px;background:#d8d8d8;"></div>
<div style="position:absolute;left:7.50px;top:223.45px;white-space:nowrap;font-size:7.5px;line-height:1;color:#444;font-weight:normal;transform:translate(-50%,-50%) scaleX(0.95);">4</div>
<div style="position:absolute;left:0.00px;top:237.40px;width:14.70px;height:0.80px;background:#d8d8d8;"></div>
<div style="position:absolute;left:7.50px;top:233.70px;white-space:nowrap;font-size:7.5px;line-height:1;color:#444;font-weight:normal;transform:translate(-50%,-50%) scaleX(0.95);">5</div>
<div style="position:absolute;left:0.00px;top:247.70px;width:14.70px;height:0.80px;background:#d8d8d8;"></div>
<div style="position:absolute;left:7.50px;top:244.15px;white-space:nowrap;font-size:7.5px;line-height:1;color:#444;font-weight:normal;transform:translate(-50%,-50%) scaleX(0.95);">6</div>
<div style="position:absolute;left:0.00px;top:258.70px;width:14.70px;height:0.80px;background:#d8d8d8;"></div>
<div style="position:absolute;left:7.50px;top:255.30px;white-space:nowrap;font-size:7.5px;line-height:1;color:#444;font-weight:normal;transform:translate(-50%,-50%) scaleX(0.95);">7</div>
<div style="position:absolute;left:0.00px;top:268.98px;width:14.70px;height:0.80px;background:#d8d8d8;"></div>
<div style="position:absolute;left:7.50px;top:265.44px;white-space:nowrap;font-size:7.5px;line-height:1;color:#444;font-weight:normal;transform:translate(-50%,-50%) scaleX(0.95);">8</div>
<div style="position:absolute;left:0.00px;top:269.48px;width:14.70px;height:10.28px;background:#d6d6d6;border-right:1.5px solid #127c41;"></div>
<div style="position:absolute;left:0.00px;top:279.26px;width:14.70px;height:0.80px;background:#d8d8d8;"></div>
<div style="position:absolute;left:7.50px;top:275.72px;white-space:nowrap;font-size:7.5px;line-height:1;color:#127c41;font-weight:normal;transform:translate(-50%,-50%) scaleX(0.95);">9</div>
<div style="position:absolute;left:0.00px;top:289.54px;width:14.70px;height:0.80px;background:#d8d8d8;"></div>
<div style="position:absolute;left:7.50px;top:286.00px;white-space:nowrap;font-size:7.5px;line-height:1;color:#444;font-weight:normal;transform:translate(-50%,-50%) scaleX(0.95);">10</div>
<div style="position:absolute;left:0.00px;top:299.82px;width:14.70px;height:0.80px;background:#d8d8d8;"></div>
<div style="position:absolute;left:7.50px;top:296.28px;white-space:nowrap;font-size:7.5px;line-height:1;color:#444;font-weight:normal;transform:translate(-50%,-50%) scaleX(0.95);">11</div>
<div style="position:absolute;left:0.00px;top:310.10px;width:14.70px;height:0.80px;background:#d8d8d8;"></div>
<div style="position:absolute;left:7.50px;top:306.56px;white-space:nowrap;font-size:7.5px;line-height:1;color:#444;font-weight:normal;transform:translate(-50%,-50%) scaleX(0.95);">12</div>
<div style="position:absolute;left:0.00px;top:320.38px;width:14.70px;height:0.80px;background:#d8d8d8;"></div>
<div style="position:absolute;left:7.50px;top:316.84px;white-space:nowrap;font-size:7.5px;line-height:1;color:#444;font-weight:normal;transform:translate(-50%,-50%) scaleX(0.95);">13</div>
<div style="position:absolute;left:0.00px;top:330.66px;width:14.70px;height:0.80px;background:#d8d8d8;"></div>
<div style="position:absolute;left:7.50px;top:327.12px;white-space:nowrap;font-size:7.5px;line-height:1;color:#444;font-weight:normal;transform:translate(-50%,-50%) scaleX(0.95);">14</div>
<div style="position:absolute;left:0.00px;top:340.94px;width:14.70px;height:0.80px;background:#d8d8d8;"></div>
<div style="position:absolute;left:7.50px;top:337.40px;white-space:nowrap;font-size:7.5px;line-height:1;color:#444;font-weight:normal;transform:translate(-50%,-50%) scaleX(0.95);">15</div>
<div style="position:absolute;left:0.00px;top:351.22px;width:14.70px;height:0.80px;background:#d8d8d8;"></div>
<div style="position:absolute;left:7.50px;top:347.68px;white-space:nowrap;font-size:7.5px;line-height:1;color:#444;font-weight:normal;transform:translate(-50%,-50%) scaleX(0.95);">16</div>
<div style="position:absolute;left:0.00px;top:361.50px;width:14.70px;height:0.80px;background:#d8d8d8;"></div>
<div style="position:absolute;left:7.50px;top:357.96px;white-space:nowrap;font-size:7.5px;line-height:1;color:#444;font-weight:normal;transform:translate(-50%,-50%) scaleX(0.95);">17</div>
<div style="position:absolute;left:0.00px;top:371.78px;width:14.70px;height:0.80px;background:#d8d8d8;"></div>
<div style="position:absolute;left:7.50px;top:368.24px;white-space:nowrap;font-size:7.5px;line-height:1;color:#444;font-weight:normal;transform:translate(-50%,-50%) scaleX(0.95);">18</div>
<div style="position:absolute;left:0.00px;top:382.06px;width:14.70px;height:0.80px;background:#d8d8d8;"></div>
<div style="position:absolute;left:7.50px;top:378.52px;white-space:nowrap;font-size:7.5px;line-height:1;color:#444;font-weight:normal;transform:translate(-50%,-50%) scaleX(0.95);">19</div>
<div style="position:absolute;left:0.00px;top:392.34px;width:14.70px;height:0.80px;background:#d8d8d8;"></div>
<div style="position:absolute;left:7.50px;top:388.80px;white-space:nowrap;font-size:7.5px;line-height:1;color:#444;font-weight:normal;transform:translate(-50%,-50%) scaleX(0.95);">20</div>
<div style="position:absolute;left:0.00px;top:402.62px;width:14.70px;height:0.80px;background:#d8d8d8;"></div>
<div style="position:absolute;left:7.50px;top:399.08px;white-space:nowrap;font-size:7.5px;line-height:1;color:#444;font-weight:normal;transform:translate(-50%,-50%) scaleX(0.95);">21</div>
<div style="position:absolute;left:0.00px;top:412.90px;width:14.70px;height:0.80px;background:#d8d8d8;"></div>
<div style="position:absolute;left:7.50px;top:409.36px;white-space:nowrap;font-size:7.5px;line-height:1;color:#444;font-weight:normal;transform:translate(-50%,-50%) scaleX(0.95);">22</div>
<div style="position:absolute;left:0.00px;top:423.18px;width:14.70px;height:0.80px;background:#d8d8d8;"></div>
<div style="position:absolute;left:7.50px;top:419.64px;white-space:nowrap;font-size:7.5px;line-height:1;color:#444;font-weight:normal;transform:translate(-50%,-50%) scaleX(0.95);">23</div>
<div style="position:absolute;left:0.00px;top:433.46px;width:14.70px;height:0.80px;background:#d8d8d8;"></div>
<div style="position:absolute;left:7.50px;top:429.92px;white-space:nowrap;font-size:7.5px;line-height:1;color:#444;font-weight:normal;transform:translate(-50%,-50%) scaleX(0.95);">24</div>
<div style="position:absolute;left:0.00px;top:443.74px;width:14.70px;height:0.80px;background:#d8d8d8;"></div>
<div style="position:absolute;left:7.50px;top:440.20px;white-space:nowrap;font-size:7.5px;line-height:1;color:#444;font-weight:normal;transform:translate(-50%,-50%) scaleX(0.95);">25</div>
<div style="position:absolute;left:0.00px;top:454.02px;width:14.70px;height:0.80px;background:#d8d8d8;"></div>
<div style="position:absolute;left:7.50px;top:450.48px;white-space:nowrap;font-size:7.5px;line-height:1;color:#444;font-weight:normal;transform:translate(-50%,-50%) scaleX(0.95);">26</div>
<div style="position:absolute;left:0.00px;top:464.30px;width:14.70px;height:0.80px;background:#d8d8d8;"></div>
<div style="position:absolute;left:7.50px;top:460.76px;white-space:nowrap;font-size:7.5px;line-height:1;color:#444;font-weight:normal;transform:translate(-50%,-50%) scaleX(0.95);">27</div>
<div style="position:absolute;left:0.00px;top:474.58px;width:14.70px;height:0.80px;background:#d8d8d8;"></div>
<div style="position:absolute;left:7.50px;top:471.04px;white-space:nowrap;font-size:7.5px;line-height:1;color:#444;font-weight:normal;transform:translate(-50%,-50%) scaleX(0.95);">28</div>
<div style="position:absolute;left:0.00px;top:484.86px;width:14.70px;height:0.80px;background:#d8d8d8;"></div>
<div style="position:absolute;left:7.50px;top:481.32px;white-space:nowrap;font-size:7.5px;line-height:1;color:#444;font-weight:normal;transform:translate(-50%,-50%) scaleX(0.95);">29</div>
<div style="position:absolute;left:0.00px;top:495.14px;width:14.70px;height:0.80px;background:#d8d8d8;"></div>
<div style="position:absolute;left:7.50px;top:491.60px;white-space:nowrap;font-size:7.5px;line-height:1;color:#444;font-weight:normal;transform:translate(-50%,-50%) scaleX(0.95);">30</div>
<div style="position:absolute;left:0.00px;top:505.42px;width:14.70px;height:0.80px;background:#d8d8d8;"></div>
<div style="position:absolute;left:7.50px;top:501.88px;white-space:nowrap;font-size:7.5px;line-height:1;color:#444;font-weight:normal;transform:translate(-50%,-50%) scaleX(0.95);">31</div>
<div style="position:absolute;left:508.30px;top:165.00px;width:20.95px;height:72.90px;background:#bb8a8b;"></div>
<div style="position:absolute;left:529.25px;top:165.00px;width:62.85px;height:62.30px;background:#fde4c6;"></div>
<div style="position:absolute;left:529.25px;top:227.30px;width:62.85px;height:10.60px;background:#fde4c6;"></div>
<div style="position:absolute;left:16.60px;top:178.20px;white-space:nowrap;font-size:10px;line-height:1;color:#000;font-weight:bold;transform:translateY(-50%) scaleX(0.93);transform-origin:0 50%;">vom</div>
<div style="position:absolute;left:76.70px;top:177.00px;white-space:nowrap;font-size:13.5px;line-height:1;color:#000;font-weight:bold;transform:translateY(-50%) scaleX(0.955);transform-origin:0 50%;">01.06.2025</div>
<div style="position:absolute;left:16.60px;top:199.20px;white-space:nowrap;font-size:10px;line-height:1;color:#000;font-weight:bold;transform:translateY(-50%) scaleX(0.87);transform-origin:0 50%;">bis zum</div>
<div style="position:absolute;left:76.70px;top:198.00px;white-space:nowrap;font-size:13.5px;line-height:1;color:#000;font-weight:bold;transform:translateY(-50%) scaleX(0.955);transform-origin:0 50%;">06.02.2026</div>
<div style="position:absolute;left:52.30px;top:206.20px;width:90.20px;height:10.70px;background:#a5a5a5;border:1px solid #7f7f7f;"></div>
<div style="position:absolute;left:97.50px;top:211.80px;white-space:nowrap;font-size:7.5px;line-height:1;color:#eee;font-weight:normal;transform:translate(-50%,-50%) scaleX(0.92);">&gt;&gt;HEUTE&lt;&lt;</div>
<div style="position:absolute;left:16.00px;top:223.00px;white-space:nowrap;font-size:7.6px;line-height:1;color:#d42c40;font-weight:normal;transform:translateY(-50%) scaleX(0.915);transform-origin:0 50%;">Zum Ändern oben auf PersonalEinsatzPlanung &gt; Einstellungen, ACHTUNG: Niemals Zellen nach unten oder oben Ziehen!!!</div>
<div style="position:absolute;left:479.00px;top:199.80px;white-space:nowrap;font-size:7.2px;line-height:1;color:#000;font-weight:bold;transform:translate(-100%,-50%) scaleX(0.95);transform-origin:100% 50%;">Monat</div>
<div style="position:absolute;left:479.00px;top:211.40px;white-space:nowrap;font-size:7.2px;line-height:1;color:#000;font-weight:bold;transform:translate(-100%,-50%) scaleX(0.95);transform-origin:100% 50%;">KW</div>
<div style="position:absolute;left:507.00px;top:199.80px;white-space:nowrap;font-size:7.2px;line-height:1;color:#000;font-weight:bold;transform:translate(-100%,-50%) scaleX(0.95);transform-origin:100% 50%;">Monat</div>
<div style="position:absolute;left:507.00px;top:211.40px;white-space:nowrap;font-size:7.2px;line-height:1;color:#000;font-weight:bold;transform:translate(-100%,-50%) scaleX(0.95);transform-origin:100% 50%;">KW</div>
<div style="position:absolute;left:602.60px;top:211.40px;white-space:nowrap;font-size:7.5px;line-height:1;color:#000;font-weight:bold;transform:translate(-50%,-50%) scaleX(1.0);">28</div>
<div style="position:absolute;left:518.77px;top:222.65px;white-space:nowrap;font-size:7.3px;line-height:1;color:#333;font-weight:normal;transform:translate(-50%,-50%) scaleX(1.0);">Do</div>
<div style="position:absolute;left:518.77px;top:232.90px;white-space:nowrap;font-size:6.8px;line-height:1;color:#111;font-weight:bold;transform:translate(-50%,-50%) scaleX(0.95);">3.7</div>
<div style="position:absolute;left:539.73px;top:222.65px;white-space:nowrap;font-size:7.3px;line-height:1;color:#333;font-weight:normal;transform:translate(-50%,-50%) scaleX(1.0);">Fr</div>
<div style="position:absolute;left:539.73px;top:232.90px;white-space:nowrap;font-size:6.8px;line-height:1;color:#111;font-weight:bold;transform:translate(-50%,-50%) scaleX(0.95);">4.7</div>
<div style="position:absolute;left:560.67px;top:222.65px;white-space:nowrap;font-size:7.3px;line-height:1;color:#333;font-weight:normal;transform:translate(-50%,-50%) scaleX(1.0);">Sa</div>
<div style="position:absolute;left:560.67px;top:232.90px;white-space:nowrap;font-size:6.8px;line-height:1;color:#111;font-weight:bold;transform:translate(-50%,-50%) scaleX(0.95);">5.7</div>
<div style="position:absolute;left:581.62px;top:222.65px;white-space:nowrap;font-size:7.3px;line-height:1;color:#333;font-weight:normal;transform:translate(-50%,-50%) scaleX(1.0);">So</div>
<div style="position:absolute;left:581.62px;top:232.90px;white-space:nowrap;font-size:6.8px;line-height:1;color:#111;font-weight:bold;transform:translate(-50%,-50%) scaleX(0.95);">6.7</div>
<div style="position:absolute;left:602.58px;top:222.65px;white-space:nowrap;font-size:7.3px;line-height:1;color:#333;font-weight:normal;transform:translate(-50%,-50%) scaleX(1.0);">Mo</div>
<div style="position:absolute;left:602.58px;top:232.90px;white-space:nowrap;font-size:6.8px;line-height:1;color:#111;font-weight:bold;transform:translate(-50%,-50%) scaleX(0.95);">7.7</div>
<div style="position:absolute;left:623.52px;top:222.65px;white-space:nowrap;font-size:7.3px;line-height:1;color:#333;font-weight:normal;transform:translate(-50%,-50%) scaleX(1.0);">Di</div>
<div style="position:absolute;left:623.52px;top:232.90px;white-space:nowrap;font-size:6.8px;line-height:1;color:#111;font-weight:bold;transform:translate(-50%,-50%) scaleX(0.95);">8.7</div>
<div style="position:absolute;left:644.48px;top:222.65px;white-space:nowrap;font-size:7.3px;line-height:1;color:#333;font-weight:normal;transform:translate(-50%,-50%) scaleX(1.0);">Mi</div>
<div style="position:absolute;left:644.48px;top:232.90px;white-space:nowrap;font-size:6.8px;line-height:1;color:#111;font-weight:bold;transform:translate(-50%,-50%) scaleX(0.95);">9.7</div>
<div style="position:absolute;left:665.42px;top:222.65px;white-space:nowrap;font-size:7.3px;line-height:1;color:#333;font-weight:normal;transform:translate(-50%,-50%) scaleX(1.0);">Do</div>
<div style="position:absolute;left:665.42px;top:232.90px;white-space:nowrap;font-size:6.8px;line-height:1;color:#111;font-weight:bold;transform:translate(-50%,-50%) scaleX(0.95);">10.7</div>
<div style="position:absolute;left:686.38px;top:222.65px;white-space:nowrap;font-size:7.3px;line-height:1;color:#333;font-weight:normal;transform:translate(-50%,-50%) scaleX(1.0);">Fr</div>
<div style="position:absolute;left:686.38px;top:232.90px;white-space:nowrap;font-size:6.8px;line-height:1;color:#111;font-weight:bold;transform:translate(-50%,-50%) scaleX(0.95);">11.7</div>
<div style="position:absolute;left:707.33px;top:222.65px;white-space:nowrap;font-size:7.3px;line-height:1;color:#333;font-weight:normal;transform:translate(-50%,-50%) scaleX(1.0);">Sa</div>
<div style="position:absolute;left:707.33px;top:232.90px;white-space:nowrap;font-size:6.8px;line-height:1;color:#111;font-weight:bold;transform:translate(-50%,-50%) scaleX(0.95);">12.7</div>
<div style="position:absolute;left:728.27px;top:222.65px;white-space:nowrap;font-size:7.3px;line-height:1;color:#333;font-weight:normal;transform:translate(-50%,-50%) scaleX(1.0);">So</div>
<div style="position:absolute;left:728.27px;top:232.90px;white-space:nowrap;font-size:6.8px;line-height:1;color:#111;font-weight:bold;transform:translate(-50%,-50%) scaleX(0.95);">13.7</div>
<div style="position:absolute;left:749.23px;top:222.65px;white-space:nowrap;font-size:7.3px;line-height:1;color:#333;font-weight:normal;transform:translate(-50%,-50%) scaleX(1.0);">Mo</div>
<div style="position:absolute;left:749.23px;top:232.90px;white-space:nowrap;font-size:6.8px;line-height:1;color:#111;font-weight:bold;transform:translate(-50%,-50%) scaleX(0.95);">14.7</div>
<div style="position:absolute;left:770.17px;top:222.65px;white-space:nowrap;font-size:7.3px;line-height:1;color:#333;font-weight:normal;transform:translate(-50%,-50%) scaleX(1.0);">Di</div>
<div style="position:absolute;left:770.17px;top:232.90px;white-space:nowrap;font-size:6.8px;line-height:1;color:#111;font-weight:bold;transform:translate(-50%,-50%) scaleX(0.95);">15.7</div>
<div style="position:absolute;left:791.12px;top:222.65px;white-space:nowrap;font-size:7.3px;line-height:1;color:#333;font-weight:normal;transform:translate(-50%,-50%) scaleX(1.0);">Mi</div>
<div style="position:absolute;left:791.12px;top:232.90px;white-space:nowrap;font-size:6.8px;line-height:1;color:#111;font-weight:bold;transform:translate(-50%,-50%) scaleX(0.95);">16.7</div>
<div style="position:absolute;left:812.08px;top:222.65px;white-space:nowrap;font-size:7.3px;line-height:1;color:#333;font-weight:normal;transform:translate(-50%,-50%) scaleX(1.0);">Do</div>
<div style="position:absolute;left:812.08px;top:232.90px;white-space:nowrap;font-size:6.8px;line-height:1;color:#111;font-weight:bold;transform:translate(-50%,-50%) scaleX(0.95);">17.7</div>
<div style="position:absolute;left:833.02px;top:222.65px;white-space:nowrap;font-size:7.3px;line-height:1;color:#333;font-weight:normal;transform:translate(-50%,-50%) scaleX(1.0);">Fr</div>
<div style="position:absolute;left:833.02px;top:232.90px;white-space:nowrap;font-size:6.8px;line-height:1;color:#111;font-weight:bold;transform:translate(-50%,-50%) scaleX(0.95);">18.7</div>
<div style="position:absolute;left:853.98px;top:222.65px;white-space:nowrap;font-size:7.3px;line-height:1;color:#333;font-weight:normal;transform:translate(-50%,-50%) scaleX(1.0);">Sa</div>
<div style="position:absolute;left:853.98px;top:232.90px;white-space:nowrap;font-size:6.8px;line-height:1;color:#111;font-weight:bold;transform:translate(-50%,-50%) scaleX(0.95);">19.7</div>
<div style="position:absolute;left:874.92px;top:222.65px;white-space:nowrap;font-size:7.3px;line-height:1;color:#333;font-weight:normal;transform:translate(-50%,-50%) scaleX(1.0);">So</div>
<div style="position:absolute;left:874.92px;top:232.90px;white-space:nowrap;font-size:6.8px;line-height:1;color:#111;font-weight:bold;transform:translate(-50%,-50%) scaleX(0.95);">20.7</div>
<div style="position:absolute;left:895.88px;top:222.65px;white-space:nowrap;font-size:7.3px;line-height:1;color:#333;font-weight:normal;transform:translate(-50%,-50%) scaleX(1.0);">Mo</div>
<div style="position:absolute;left:895.88px;top:232.90px;white-space:nowrap;font-size:6.8px;line-height:1;color:#111;font-weight:bold;transform:translate(-50%,-50%) scaleX(0.95);">21.7</div>
<div style="position:absolute;left:916.83px;top:222.65px;white-space:nowrap;font-size:7.3px;line-height:1;color:#333;font-weight:normal;transform:translate(-50%,-50%) scaleX(1.0);">Di</div>
<div style="position:absolute;left:916.83px;top:232.90px;white-space:nowrap;font-size:6.8px;line-height:1;color:#111;font-weight:bold;transform:translate(-50%,-50%) scaleX(0.95);">22.7</div>
<div style="position:absolute;left:937.77px;top:222.65px;white-space:nowrap;font-size:7.3px;line-height:1;color:#333;font-weight:normal;transform:translate(-50%,-50%) scaleX(1.0);">Mi</div>
<div style="position:absolute;left:937.77px;top:232.90px;white-space:nowrap;font-size:6.8px;line-height:1;color:#111;font-weight:bold;transform:translate(-50%,-50%) scaleX(0.95);">23.7</div>
<div style="position:absolute;left:958.73px;top:222.65px;white-space:nowrap;font-size:7.3px;line-height:1;color:#333;font-weight:normal;transform:translate(-50%,-50%) scaleX(1.0);">Do</div>
<div style="position:absolute;left:958.73px;top:232.90px;white-space:nowrap;font-size:6.8px;line-height:1;color:#111;font-weight:bold;transform:translate(-50%,-50%) scaleX(0.95);">24.7</div>
<div style="position:absolute;left:979.67px;top:222.65px;white-space:nowrap;font-size:7.3px;line-height:1;color:#333;font-weight:normal;transform:translate(-50%,-50%) scaleX(1.0);">Fr</div>
<div style="position:absolute;left:979.67px;top:232.90px;white-space:nowrap;font-size:6.8px;line-height:1;color:#111;font-weight:bold;transform:translate(-50%,-50%) scaleX(0.95);">25.7</div>
<div style="position:absolute;left:1000.62px;top:222.65px;white-space:nowrap;font-size:7.3px;line-height:1;color:#333;font-weight:normal;transform:translate(-50%,-50%) scaleX(1.0);">Sa</div>
<div style="position:absolute;left:1000.62px;top:232.90px;white-space:nowrap;font-size:6.8px;line-height:1;color:#111;font-weight:bold;transform:translate(-50%,-50%) scaleX(0.95);">26.7</div>
<div style="position:absolute;left:1021.57px;top:222.65px;white-space:nowrap;font-size:7.3px;line-height:1;color:#333;font-weight:normal;transform:translate(-50%,-50%) scaleX(1.0);">So</div>
<div style="position:absolute;left:1021.57px;top:232.90px;white-space:nowrap;font-size:6.8px;line-height:1;color:#111;font-weight:bold;transform:translate(-50%,-50%) scaleX(0.95);">27.7</div>
<div style="position:absolute;left:1042.53px;top:222.65px;white-space:nowrap;font-size:7.3px;line-height:1;color:#333;font-weight:normal;transform:translate(-50%,-50%) scaleX(1.0);">Mo</div>
<div style="position:absolute;left:1042.53px;top:232.90px;white-space:nowrap;font-size:6.8px;line-height:1;color:#111;font-weight:bold;transform:translate(-50%,-50%) scaleX(0.95);">28.7</div>
<div style="position:absolute;left:1063.47px;top:222.65px;white-space:nowrap;font-size:7.3px;line-height:1;color:#333;font-weight:normal;transform:translate(-50%,-50%) scaleX(1.0);">Di</div>
<div style="position:absolute;left:1063.47px;top:232.90px;white-space:nowrap;font-size:6.8px;line-height:1;color:#111;font-weight:bold;transform:translate(-50%,-50%) scaleX(0.95);">29.7</div>
<div style="position:absolute;left:1084.43px;top:222.65px;white-space:nowrap;font-size:7.3px;line-height:1;color:#333;font-weight:normal;transform:translate(-50%,-50%) scaleX(1.0);">Mi</div>
<div style="position:absolute;left:1084.43px;top:232.90px;white-space:nowrap;font-size:6.8px;line-height:1;color:#111;font-weight:bold;transform:translate(-50%,-50%) scaleX(0.95);">30.7</div>
<div style="position:absolute;left:508.30px;top:217.00px;width:515.70px;height:0.80px;background:#555;"></div>
<div style="position:absolute;left:508.30px;top:226.90px;width:515.70px;height:0.80px;background:#555;"></div>
<div style="position:absolute;left:508.30px;top:237.10px;width:515.70px;height:1.60px;background:#555;"></div>
<div style="position:absolute;left:508.30px;top:247.80px;width:515.70px;height:0.80px;background:#555;"></div>
<div style="position:absolute;left:528.85px;top:217.40px;width:0.80px;height:30.80px;background:#666;"></div>
<div style="position:absolute;left:549.80px;top:217.40px;width:0.80px;height:30.80px;background:#666;"></div>
<div style="position:absolute;left:570.75px;top:217.40px;width:0.80px;height:30.80px;background:#666;"></div>
<div style="position:absolute;left:591.70px;top:217.40px;width:0.80px;height:30.80px;background:#666;"></div>
<div style="position:absolute;left:612.65px;top:217.40px;width:0.80px;height:30.80px;background:#666;"></div>
<div style="position:absolute;left:633.60px;top:217.40px;width:0.80px;height:30.80px;background:#666;"></div>
<div style="position:absolute;left:654.55px;top:217.40px;width:0.80px;height:30.80px;background:#666;"></div>
<div style="position:absolute;left:675.50px;top:217.40px;width:0.80px;height:30.80px;background:#666;"></div>
<div style="position:absolute;left:696.45px;top:217.40px;width:0.80px;height:30.80px;background:#666;"></div>
<div style="position:absolute;left:717.40px;top:217.40px;width:0.80px;height:30.80px;background:#666;"></div>
<div style="position:absolute;left:738.35px;top:217.40px;width:0.80px;height:30.80px;background:#666;"></div>
<div style="position:absolute;left:759.30px;top:217.40px;width:0.80px;height:30.80px;background:#666;"></div>
<div style="position:absolute;left:780.25px;top:217.40px;width:0.80px;height:30.80px;background:#666;"></div>
<div style="position:absolute;left:801.20px;top:217.40px;width:0.80px;height:30.80px;background:#666;"></div>
<div style="position:absolute;left:822.15px;top:217.40px;width:0.80px;height:30.80px;background:#666;"></div>
<div style="position:absolute;left:843.10px;top:217.40px;width:0.80px;height:30.80px;background:#666;"></div>
<div style="position:absolute;left:864.05px;top:217.40px;width:0.80px;height:30.80px;background:#666;"></div>
<div style="position:absolute;left:885.00px;top:217.40px;width:0.80px;height:30.80px;background:#666;"></div>
<div style="position:absolute;left:905.95px;top:217.40px;width:0.80px;height:30.80px;background:#666;"></div>
<div style="position:absolute;left:926.90px;top:217.40px;width:0.80px;height:30.80px;background:#666;"></div>
<div style="position:absolute;left:947.85px;top:217.40px;width:0.80px;height:30.80px;background:#666;"></div>
<div style="position:absolute;left:968.80px;top:217.40px;width:0.80px;height:30.80px;background:#666;"></div>
<div style="position:absolute;left:989.75px;top:217.40px;width:0.80px;height:30.80px;background:#666;"></div>
<div style="position:absolute;left:1010.70px;top:217.40px;width:0.80px;height:30.80px;background:#666;"></div>
<div style="position:absolute;left:1031.65px;top:217.40px;width:0.80px;height:30.80px;background:#666;"></div>
<div style="position:absolute;left:1052.60px;top:217.40px;width:0.80px;height:30.80px;background:#666;"></div>
<div style="position:absolute;left:1073.55px;top:217.40px;width:0.80px;height:30.80px;background:#666;"></div>
<div style="position:absolute;left:1094.50px;top:217.40px;width:0.80px;height:30.80px;background:#666;"></div>
<div style="position:absolute;left:495.65px;top:233.10px;white-space:nowrap;font-size:8.5px;line-height:1;color:#111;font-weight:normal;transform:translate(-50%,-50%) scaleX(1.0);">Σ</div>
<div style="position:absolute;left:483.00px;top:237.90px;width:25.30px;height:10.30px;background:#a6a6a6;"></div>
<div style="position:absolute;left:483.00px;top:226.90px;width:25.30px;height:0.80px;background:#555;"></div>
<div style="position:absolute;left:483.00px;top:237.50px;width:25.30px;height:0.80px;background:#555;"></div>
<div style="position:absolute;left:33.50px;top:238.80px;white-space:nowrap;font-size:7.5px;line-height:1;color:#111;font-weight:bold;transform:translate(-50%,-50%) scaleX(0.95);">Pers.Nr</div>
<div style="position:absolute;left:97.45px;top:238.80px;white-space:nowrap;font-size:7.5px;line-height:1;color:#111;font-weight:bold;transform:translate(-50%,-50%) scaleX(0.95);">Name</div>
<div style="position:absolute;left:187.60px;top:238.80px;white-space:nowrap;font-size:7.5px;line-height:1;color:#111;font-weight:bold;transform:translate(-50%,-50%) scaleX(0.95);">Funktion</div>
<div style="position:absolute;left:251.05px;top:238.80px;white-space:nowrap;font-size:7.5px;line-height:1;color:#111;font-weight:bold;transform:translate(-50%,-50%) scaleX(0.95);">MA</div>
<div style="position:absolute;left:288.25px;top:238.80px;white-space:nowrap;font-size:7.5px;line-height:1;color:#111;font-weight:bold;transform:translate(-50%,-50%) scaleX(0.95);">Gruppe</div>
<div style="position:absolute;left:328.20px;top:238.80px;white-space:nowrap;font-size:5.2px;line-height:1;color:#111;font-weight:bold;transform:translate(-50%,-50%) scaleX(0.95);">Vertragende</div>
<div style="position:absolute;left:370.00px;top:238.80px;white-space:nowrap;font-size:5.2px;line-height:1;color:#111;font-weight:bold;transform:translate(-50%,-50%) scaleX(0.95);">Kostenstelle</div>
<div style="position:absolute;left:435.65px;top:238.80px;white-space:nowrap;font-size:8px;line-height:1;color:#111;font-weight:bold;transform:translate(-50%,-50%) scaleX(0.95);">Schichtmodel</div>
<div style="position:absolute;left:14.70px;top:226.80px;width:468.30px;height:0.90px;background:#333;"></div>
<div style="position:absolute;left:51.80px;top:227.30px;width:0.90px;height:20.90px;background:#444;"></div>
<div style="position:absolute;left:142.10px;top:227.30px;width:0.90px;height:20.90px;background:#444;"></div>
<div style="position:absolute;left:232.10px;top:227.30px;width:0.90px;height:20.90px;background:#444;"></div>
<div style="position:absolute;left:269.00px;top:227.30px;width:0.90px;height:20.90px;background:#444;"></div>
<div style="position:absolute;left:306.50px;top:227.30px;width:0.90px;height:20.90px;background:#444;"></div>
<div style="position:absolute;left:348.90px;top:227.30px;width:0.90px;height:20.90px;background:#444;"></div>
<div style="position:absolute;left:390.10px;top:227.30px;width:0.90px;height:20.90px;background:#444;"></div>
<div style="position:absolute;left:480.20px;top:227.30px;width:0.90px;height:20.90px;background:#444;"></div>
<div style="position:absolute;left:480.30px;top:227.30px;width:0.80px;height:277.70px;background:#b8b8b8;"></div>
<div style="position:absolute;left:482.90px;top:227.30px;width:0.80px;height:277.70px;background:#555;"></div>
<div style="position:absolute;left:481.80px;top:238.00px;white-space:nowrap;font-size:6.5px;line-height:1;color:#111;font-weight:normal;transform:translate(-50%,-50%) scaleX(1.0);overflow:hidden;">r</div>
<div style="position:absolute;left:14.70px;top:248.20px;width:1009.30px;height:11.00px;background:#000;"></div>
<div style="position:absolute;left:483.00px;top:248.20px;width:25.30px;height:11.00px;background:#1a1a1a;"></div>
<svg style="position:absolute;left:130.30px;top:252.6px" width="6" height="4" viewBox="0 0 6 4"><path d="M0 0 H6 L4.3 3.3 H1.7 Z" fill="#fff"/></svg>
<svg style="position:absolute;left:220.30px;top:252.6px" width="6" height="4" viewBox="0 0 6 4"><path d="M0 0 H6 L4.3 3.3 H1.7 Z" fill="#fff"/></svg>
<svg style="position:absolute;left:257.20px;top:252.6px" width="6" height="4" viewBox="0 0 6 4"><path d="M0 0 H6 L4.3 3.3 H1.7 Z" fill="#fff"/></svg>
<svg style="position:absolute;left:294.70px;top:252.6px" width="6" height="4" viewBox="0 0 6 4"><path d="M0 0 H6 L4.3 3.3 H1.7 Z" fill="#fff"/></svg>
<svg style="position:absolute;left:337.10px;top:252.6px" width="6" height="4" viewBox="0 0 6 4"><path d="M0 0 H6 L4.3 3.3 H1.7 Z" fill="#fff"/></svg>
<svg style="position:absolute;left:378.30px;top:252.6px" width="6" height="4" viewBox="0 0 6 4"><path d="M0 0 H6 L4.3 3.3 H1.7 Z" fill="#fff"/></svg>
<svg style="position:absolute;left:468.40px;top:252.6px" width="6" height="4" viewBox="0 0 6 4"><path d="M0 0 H6 L4.3 3.3 H1.7 Z" fill="#fff"/></svg>
<svg style="position:absolute;left:516.95px;top:252.6px" width="6" height="4" viewBox="0 0 6 4"><path d="M0 0 H6 L4.3 3.3 H1.7 Z" fill="#fff"/></svg>
<svg style="position:absolute;left:537.90px;top:252.6px" width="6" height="4" viewBox="0 0 6 4"><path d="M0 0 H6 L4.3 3.3 H1.7 Z" fill="#fff"/></svg>
<svg style="position:absolute;left:558.85px;top:252.6px" width="6" height="4" viewBox="0 0 6 4"><path d="M0 0 H6 L4.3 3.3 H1.7 Z" fill="#fff"/></svg>
<svg style="position:absolute;left:579.80px;top:252.6px" width="6" height="4" viewBox="0 0 6 4"><path d="M0 0 H6 L4.3 3.3 H1.7 Z" fill="#fff"/></svg>
<svg style="position:absolute;left:600.75px;top:252.6px" width="6" height="4" viewBox="0 0 6 4"><path d="M0 0 H6 L4.3 3.3 H1.7 Z" fill="#fff"/></svg>
<svg style="position:absolute;left:621.70px;top:252.6px" width="6" height="4" viewBox="0 0 6 4"><path d="M0 0 H6 L4.3 3.3 H1.7 Z" fill="#fff"/></svg>
<svg style="position:absolute;left:642.65px;top:252.6px" width="6" height="4" viewBox="0 0 6 4"><path d="M0 0 H6 L4.3 3.3 H1.7 Z" fill="#fff"/></svg>
<svg style="position:absolute;left:663.60px;top:252.6px" width="6" height="4" viewBox="0 0 6 4"><path d="M0 0 H6 L4.3 3.3 H1.7 Z" fill="#fff"/></svg>
<svg style="position:absolute;left:684.55px;top:252.6px" width="6" height="4" viewBox="0 0 6 4"><path d="M0 0 H6 L4.3 3.3 H1.7 Z" fill="#fff"/></svg>
<svg style="position:absolute;left:705.50px;top:252.6px" width="6" height="4" viewBox="0 0 6 4"><path d="M0 0 H6 L4.3 3.3 H1.7 Z" fill="#fff"/></svg>
<svg style="position:absolute;left:726.45px;top:252.6px" width="6" height="4" viewBox="0 0 6 4"><path d="M0 0 H6 L4.3 3.3 H1.7 Z" fill="#fff"/></svg>
<svg style="position:absolute;left:747.40px;top:252.6px" width="6" height="4" viewBox="0 0 6 4"><path d="M0 0 H6 L4.3 3.3 H1.7 Z" fill="#fff"/></svg>
<svg style="position:absolute;left:768.35px;top:252.6px" width="6" height="4" viewBox="0 0 6 4"><path d="M0 0 H6 L4.3 3.3 H1.7 Z" fill="#fff"/></svg>
<svg style="position:absolute;left:789.30px;top:252.6px" width="6" height="4" viewBox="0 0 6 4"><path d="M0 0 H6 L4.3 3.3 H1.7 Z" fill="#fff"/></svg>
<svg style="position:absolute;left:810.25px;top:252.6px" width="6" height="4" viewBox="0 0 6 4"><path d="M0 0 H6 L4.3 3.3 H1.7 Z" fill="#fff"/></svg>
<svg style="position:absolute;left:831.20px;top:252.6px" width="6" height="4" viewBox="0 0 6 4"><path d="M0 0 H6 L4.3 3.3 H1.7 Z" fill="#fff"/></svg>
<svg style="position:absolute;left:852.15px;top:252.6px" width="6" height="4" viewBox="0 0 6 4"><path d="M0 0 H6 L4.3 3.3 H1.7 Z" fill="#fff"/></svg>
<svg style="position:absolute;left:873.10px;top:252.6px" width="6" height="4" viewBox="0 0 6 4"><path d="M0 0 H6 L4.3 3.3 H1.7 Z" fill="#fff"/></svg>
<svg style="position:absolute;left:894.05px;top:252.6px" width="6" height="4" viewBox="0 0 6 4"><path d="M0 0 H6 L4.3 3.3 H1.7 Z" fill="#fff"/></svg>
<svg style="position:absolute;left:915.00px;top:252.6px" width="6" height="4" viewBox="0 0 6 4"><path d="M0 0 H6 L4.3 3.3 H1.7 Z" fill="#fff"/></svg>
<svg style="position:absolute;left:935.95px;top:252.6px" width="6" height="4" viewBox="0 0 6 4"><path d="M0 0 H6 L4.3 3.3 H1.7 Z" fill="#fff"/></svg>
<svg style="position:absolute;left:956.90px;top:252.6px" width="6" height="4" viewBox="0 0 6 4"><path d="M0 0 H6 L4.3 3.3 H1.7 Z" fill="#fff"/></svg>
<svg style="position:absolute;left:977.85px;top:252.6px" width="6" height="4" viewBox="0 0 6 4"><path d="M0 0 H6 L4.3 3.3 H1.7 Z" fill="#fff"/></svg>
<svg style="position:absolute;left:998.80px;top:252.6px" width="6" height="4" viewBox="0 0 6 4"><path d="M0 0 H6 L4.3 3.3 H1.7 Z" fill="#fff"/></svg>
<svg style="position:absolute;left:1019.75px;top:252.6px" width="6" height="4" viewBox="0 0 6 4"><path d="M0 0 H6 L4.3 3.3 H1.7 Z" fill="#fff"/></svg>
<svg style="position:absolute;left:1040.70px;top:252.6px" width="6" height="4" viewBox="0 0 6 4"><path d="M0 0 H6 L4.3 3.3 H1.7 Z" fill="#fff"/></svg>
<svg style="position:absolute;left:1061.65px;top:252.6px" width="6" height="4" viewBox="0 0 6 4"><path d="M0 0 H6 L4.3 3.3 H1.7 Z" fill="#fff"/></svg>
<svg style="position:absolute;left:1082.60px;top:252.6px" width="6" height="4" viewBox="0 0 6 4"><path d="M0 0 H6 L4.3 3.3 H1.7 Z" fill="#fff"/></svg>
<div style="position:absolute;left:14.70px;top:259.20px;width:466.00px;height:10.28px;background:#5fb594;"></div>
<div style="position:absolute;left:15.50px;top:265.54px;white-space:nowrap;font-size:7.6px;line-height:1;color:#111;font-weight:normal;transform:translateY(-50%) scaleX(0.93);transform-origin:0 50%;">S0018</div>
<div style="position:absolute;left:53.00px;top:265.54px;white-space:nowrap;font-size:7.6px;line-height:1;color:#111;font-weight:normal;transform:translateY(-50%) scaleX(0.93);transform-origin:0 50%;">Simon Klein</div>
<div style="position:absolute;left:143.50px;top:265.54px;white-space:nowrap;font-size:7.6px;line-height:1;color:#111;font-weight:normal;transform:translateY(-50%) scaleX(0.93);transform-origin:0 50%;">Produktionsassistenz</div>
<div style="position:absolute;left:233.50px;top:265.54px;white-space:nowrap;font-size:7.6px;line-height:1;color:#111;font-weight:normal;transform:translateY(-50%) scaleX(0.93);transform-origin:0 50%;">fest</div>
<div style="position:absolute;left:270.50px;top:265.54px;white-space:nowrap;font-size:5.7px;line-height:1;color:#111;font-weight:normal;transform:translateY(-50%) scaleX(0.9);transform-origin:0 50%;">Hauptmontage</div>
<div style="position:absolute;left:308.00px;top:265.54px;white-space:nowrap;font-size:7.6px;line-height:1;color:#111;font-weight:normal;transform:translateY(-50%) scaleX(0.93);transform-origin:0 50%;">31.12.99</div>
<div style="position:absolute;left:350.50px;top:265.54px;white-space:nowrap;font-size:7.6px;line-height:1;color:#111;font-weight:normal;transform:translateY(-50%) scaleX(0.93);transform-origin:0 50%;">KST16</div>
<div style="position:absolute;left:391.50px;top:265.54px;white-space:nowrap;font-size:7.6px;line-height:1;color:#111;font-weight:normal;transform:translateY(-50%) scaleX(0.93);transform-origin:0 50%;">FSN - 2</div>
<div style="position:absolute;left:508.30px;top:259.20px;width:20.95px;height:10.28px;background:#fcf2c4;"></div>
<div style="position:absolute;left:518.77px;top:265.54px;white-space:nowrap;font-size:8px;line-height:1;color:#1a1a1a;font-weight:normal;transform:translate(-50%,-50%) scaleX(0.88);">FPA</div>
<div style="position:absolute;left:529.25px;top:259.20px;width:20.95px;height:10.28px;background:#fcf2c4;"></div>
<div style="position:absolute;left:539.73px;top:265.54px;white-space:nowrap;font-size:8px;line-height:1;color:#1a1a1a;font-weight:normal;transform:translate(-50%,-50%) scaleX(0.88);">FPA</div>
<div style="position:absolute;left:592.10px;top:259.20px;width:20.95px;height:10.28px;background:#5c8de3;"></div>
<div style="position:absolute;left:602.58px;top:265.54px;white-space:nowrap;font-size:8px;line-height:1;color:#1a1a1a;font-weight:normal;transform:translate(-50%,-50%) scaleX(0.88);">U</div>
<div style="position:absolute;left:613.05px;top:259.20px;width:20.95px;height:10.28px;background:#5c8de3;"></div>
<div style="position:absolute;left:14.70px;top:269.48px;width:466.00px;height:10.28px;background:#4f3f9c;"></div>
<div style="position:absolute;left:15.50px;top:275.82px;white-space:nowrap;font-size:7.6px;line-height:1;color:#fff;font-weight:normal;transform:translateY(-50%) scaleX(0.93);transform-origin:0 50%;">S0017</div>
<div style="position:absolute;left:53.00px;top:275.82px;white-space:nowrap;font-size:7.6px;line-height:1;color:#fff;font-weight:normal;transform:translateY(-50%) scaleX(0.93);transform-origin:0 50%;">Laura Braun</div>
<div style="position:absolute;left:143.50px;top:275.82px;white-space:nowrap;font-size:7.6px;line-height:1;color:#fff;font-weight:normal;transform:translateY(-50%) scaleX(0.93);transform-origin:0 50%;">Produktionsmechaniker</div>
<div style="position:absolute;left:233.50px;top:275.82px;white-space:nowrap;font-size:7.6px;line-height:1;color:#fff;font-weight:normal;transform:translateY(-50%) scaleX(0.93);transform-origin:0 50%;">fest</div>
<div style="position:absolute;left:270.50px;top:275.82px;white-space:nowrap;font-size:5.7px;line-height:1;color:#fff;font-weight:normal;transform:translateY(-50%) scaleX(0.9);transform-origin:0 50%;">Hauptmontage</div>
<div style="position:absolute;left:308.00px;top:275.82px;white-space:nowrap;font-size:7.6px;line-height:1;color:#fff;font-weight:normal;transform:translateY(-50%) scaleX(0.93);transform-origin:0 50%;">31.12.99</div>
<div style="position:absolute;left:350.50px;top:275.82px;white-space:nowrap;font-size:7.6px;line-height:1;color:#fff;font-weight:normal;transform:translateY(-50%) scaleX(0.93);transform-origin:0 50%;">KST16</div>
<div style="position:absolute;left:391.50px;top:275.82px;white-space:nowrap;font-size:7.6px;line-height:1;color:#fff;font-weight:normal;transform:translateY(-50%) scaleX(0.93);transform-origin:0 50%;">FSN - 1</div>
<div style="position:absolute;left:508.30px;top:269.48px;width:20.95px;height:10.28px;background:#20a69a;"></div>
<div style="position:absolute;left:518.77px;top:275.82px;white-space:nowrap;font-size:8px;line-height:1;color:#1a1a1a;font-weight:normal;transform:translate(-50%,-50%) scaleX(0.88);">NPM</div>
<div style="position:absolute;left:592.10px;top:269.48px;width:20.95px;height:10.28px;background:#fcf2c4;"></div>
<div style="position:absolute;left:602.58px;top:275.82px;white-space:nowrap;font-size:8px;line-height:1;color:#1a1a1a;font-weight:normal;transform:translate(-50%,-50%) scaleX(0.88);">FPM</div>
<div style="position:absolute;left:613.05px;top:269.48px;width:20.95px;height:10.28px;background:#fcf2c4;"></div>
<div style="position:absolute;left:14.70px;top:279.76px;width:466.00px;height:10.28px;background:#8b90c6;"></div>
<div style="position:absolute;left:15.50px;top:286.10px;white-space:nowrap;font-size:7.6px;line-height:1;color:#111;font-weight:normal;transform:translateY(-50%) scaleX(0.93);transform-origin:0 50%;">S0011</div>
<div style="position:absolute;left:53.00px;top:286.10px;white-space:nowrap;font-size:7.6px;line-height:1;color:#111;font-weight:normal;transform:translateY(-50%) scaleX(0.93);transform-origin:0 50%;">Jan Zimmermann</div>
<div style="position:absolute;left:143.50px;top:286.10px;white-space:nowrap;font-size:7.6px;line-height:1;color:#111;font-weight:normal;transform:translateY(-50%) scaleX(0.93);transform-origin:0 50%;">Schichtführer</div>
<div style="position:absolute;left:233.50px;top:286.10px;white-space:nowrap;font-size:7.6px;line-height:1;color:#111;font-weight:normal;transform:translateY(-50%) scaleX(0.93);transform-origin:0 50%;">fest</div>
<div style="position:absolute;left:270.50px;top:286.10px;white-space:nowrap;font-size:5.7px;line-height:1;color:#111;font-weight:normal;transform:translateY(-50%) scaleX(0.9);transform-origin:0 50%;">Hauptmontage</div>
<div style="position:absolute;left:308.00px;top:286.10px;white-space:nowrap;font-size:7.6px;line-height:1;color:#111;font-weight:normal;transform:translateY(-50%) scaleX(0.93);transform-origin:0 50%;">31.12.99</div>
<div style="position:absolute;left:350.50px;top:286.10px;white-space:nowrap;font-size:7.6px;line-height:1;color:#111;font-weight:normal;transform:translateY(-50%) scaleX(0.93);transform-origin:0 50%;">KST16</div>
<div style="position:absolute;left:391.50px;top:286.10px;white-space:nowrap;font-size:7.6px;line-height:1;color:#111;font-weight:normal;transform:translateY(-50%) scaleX(0.93);transform-origin:0 50%;">FSN - 1</div>
<div style="position:absolute;left:508.30px;top:279.76px;width:20.95px;height:10.28px;background:#20a69a;"></div>
<div style="position:absolute;left:518.77px;top:286.10px;white-space:nowrap;font-size:8px;line-height:1;color:#1a1a1a;font-weight:normal;transform:translate(-50%,-50%) scaleX(0.88);">NS</div>
<div style="position:absolute;left:592.10px;top:279.76px;width:20.95px;height:10.28px;background:#5c8de3;"></div>
<div style="position:absolute;left:602.58px;top:286.10px;white-space:nowrap;font-size:8px;line-height:1;color:#1a1a1a;font-weight:normal;transform:translate(-50%,-50%) scaleX(0.88);">U</div>
<div style="position:absolute;left:613.05px;top:279.76px;width:20.95px;height:10.28px;background:#5c8de3;"></div>
<div style="position:absolute;left:14.70px;top:290.04px;width:466.00px;height:10.28px;background:#8b90c6;"></div>
<div style="position:absolute;left:15.50px;top:296.38px;white-space:nowrap;font-size:7.6px;line-height:1;color:#111;font-weight:normal;transform:translateY(-50%) scaleX(0.93);transform-origin:0 50%;">S0016</div>
<div style="position:absolute;left:53.00px;top:296.38px;white-space:nowrap;font-size:7.6px;line-height:1;color:#111;font-weight:normal;transform:translateY(-50%) scaleX(0.93);transform-origin:0 50%;">Katrin Schmid</div>
<div style="position:absolute;left:143.50px;top:296.38px;white-space:nowrap;font-size:7.6px;line-height:1;color:#111;font-weight:normal;transform:translateY(-50%) scaleX(0.93);transform-origin:0 50%;">Schichtführer</div>
<div style="position:absolute;left:233.50px;top:296.38px;white-space:nowrap;font-size:7.6px;line-height:1;color:#111;font-weight:normal;transform:translateY(-50%) scaleX(0.93);transform-origin:0 50%;">fest</div>
<div style="position:absolute;left:270.50px;top:296.38px;white-space:nowrap;font-size:5.7px;line-height:1;color:#111;font-weight:normal;transform:translateY(-50%) scaleX(0.9);transform-origin:0 50%;">Hauptmontage</div>
<div style="position:absolute;left:308.00px;top:296.38px;white-space:nowrap;font-size:7.6px;line-height:1;color:#111;font-weight:normal;transform:translateY(-50%) scaleX(0.93);transform-origin:0 50%;">31.12.99</div>
<div style="position:absolute;left:350.50px;top:296.38px;white-space:nowrap;font-size:7.6px;line-height:1;color:#111;font-weight:normal;transform:translateY(-50%) scaleX(0.93);transform-origin:0 50%;">KST16</div>
<div style="position:absolute;left:391.50px;top:296.38px;white-space:nowrap;font-size:7.6px;line-height:1;color:#111;font-weight:normal;transform:translateY(-50%) scaleX(0.93);transform-origin:0 50%;">FSN - 3</div>
<div style="position:absolute;left:508.30px;top:290.04px;width:20.95px;height:10.28px;background:#a9d4e4;"></div>
<div style="position:absolute;left:518.77px;top:296.38px;white-space:nowrap;font-size:8px;line-height:1;color:#1a1a1a;font-weight:normal;transform:translate(-50%,-50%) scaleX(0.88);">SS</div>
<div style="position:absolute;left:529.25px;top:290.04px;width:20.95px;height:10.28px;background:#a9d4e4;"></div>
<div style="position:absolute;left:539.73px;top:296.38px;white-space:nowrap;font-size:8px;line-height:1;color:#1a1a1a;font-weight:normal;transform:translate(-50%,-50%) scaleX(0.88);">SS</div>
<div style="position:absolute;left:571.15px;top:290.04px;width:20.95px;height:10.28px;background:#20a69a;"></div>
<div style="position:absolute;left:581.62px;top:296.38px;white-space:nowrap;font-size:8px;line-height:1;color:#1a1a1a;font-weight:normal;transform:translate(-50%,-50%) scaleX(0.88);">NS</div>
<div style="position:absolute;left:592.10px;top:290.04px;width:20.95px;height:10.28px;background:#20a69a;"></div>
<div style="position:absolute;left:602.58px;top:296.38px;white-space:nowrap;font-size:8px;line-height:1;color:#1a1a1a;font-weight:normal;transform:translate(-50%,-50%) scaleX(0.88);">NS</div>
<div style="position:absolute;left:613.05px;top:290.04px;width:20.95px;height:10.28px;background:#20a69a;"></div>
<div style="position:absolute;left:1011.10px;top:290.04px;width:20.95px;height:10.28px;background:#20a69a;"></div>
<div style="position:absolute;left:1021.57px;top:296.38px;white-space:nowrap;font-size:8px;line-height:1;color:#1a1a1a;font-weight:normal;transform:translate(-50%,-50%) scaleX(0.88);">NS</div>
<div style="position:absolute;left:14.70px;top:300.32px;width:466.00px;height:10.28px;background:#c27a8b;"></div>
<div style="position:absolute;left:15.50px;top:306.66px;white-space:nowrap;font-size:7.6px;line-height:1;color:#111;font-weight:normal;transform:translateY(-50%) scaleX(0.93);transform-origin:0 50%;">S0012</div>
<div style="position:absolute;left:53.00px;top:306.66px;white-space:nowrap;font-size:7.6px;line-height:1;color:#111;font-weight:normal;transform:translateY(-50%) scaleX(0.93);transform-origin:0 50%;">Philipp Richter</div>
<div style="position:absolute;left:143.50px;top:306.66px;white-space:nowrap;font-size:7.6px;line-height:1;color:#111;font-weight:normal;transform:translateY(-50%) scaleX(0.93);transform-origin:0 50%;">Shift Line Leader</div>
<div style="position:absolute;left:233.50px;top:306.66px;white-space:nowrap;font-size:7.6px;line-height:1;color:#111;font-weight:normal;transform:translateY(-50%) scaleX(0.93);transform-origin:0 50%;">befristet</div>
<div style="position:absolute;left:270.50px;top:306.66px;white-space:nowrap;font-size:5.7px;line-height:1;color:#111;font-weight:normal;transform:translateY(-50%) scaleX(0.9);transform-origin:0 50%;">Hauptmontage</div>
<div style="position:absolute;left:307.50px;top:300.82px;width:41.40px;height:9.28px;background:#e00d0d;"></div>
<div style="position:absolute;left:308.00px;top:306.66px;white-space:nowrap;font-size:7.6px;line-height:1;color:#fff;font-weight:normal;transform:translateY(-50%) scaleX(0.93);transform-origin:0 50%;">06.06.25</div>
<div style="position:absolute;left:350.50px;top:306.66px;white-space:nowrap;font-size:7.6px;line-height:1;color:#111;font-weight:normal;transform:translateY(-50%) scaleX(0.93);transform-origin:0 50%;">KST16</div>
<div style="position:absolute;left:391.50px;top:306.66px;white-space:nowrap;font-size:7.6px;line-height:1;color:#111;font-weight:normal;transform:translateY(-50%) scaleX(0.93);transform-origin:0 50%;">FSN - 2</div>
<div style="position:absolute;left:14.70px;top:310.60px;width:466.00px;height:10.28px;background:#c27a8b;"></div>
<div style="position:absolute;left:15.50px;top:316.94px;white-space:nowrap;font-size:7.6px;line-height:1;color:#111;font-weight:normal;transform:translateY(-50%) scaleX(0.93);transform-origin:0 50%;">S0015</div>
<div style="position:absolute;left:53.00px;top:316.94px;white-space:nowrap;font-size:7.6px;line-height:1;color:#111;font-weight:normal;transform:translateY(-50%) scaleX(0.93);transform-origin:0 50%;">Mara Zimmermann</div>
<div style="position:absolute;left:143.50px;top:316.94px;white-space:nowrap;font-size:7.6px;line-height:1;color:#111;font-weight:normal;transform:translateY(-50%) scaleX(0.93);transform-origin:0 50%;">Shift Line Leader</div>
<div style="position:absolute;left:233.50px;top:316.94px;white-space:nowrap;font-size:7.6px;line-height:1;color:#111;font-weight:normal;transform:translateY(-50%) scaleX(0.93);transform-origin:0 50%;">fest</div>
<div style="position:absolute;left:270.50px;top:316.94px;white-space:nowrap;font-size:5.7px;line-height:1;color:#111;font-weight:normal;transform:translateY(-50%) scaleX(0.9);transform-origin:0 50%;">Hauptmontage</div>
<div style="position:absolute;left:308.00px;top:316.94px;white-space:nowrap;font-size:7.6px;line-height:1;color:#111;font-weight:normal;transform:translateY(-50%) scaleX(0.93);transform-origin:0 50%;">31.12.99</div>
<div style="position:absolute;left:350.50px;top:316.94px;white-space:nowrap;font-size:7.6px;line-height:1;color:#111;font-weight:normal;transform:translateY(-50%) scaleX(0.93);transform-origin:0 50%;">KST16</div>
<div style="position:absolute;left:391.50px;top:316.94px;white-space:nowrap;font-size:7.6px;line-height:1;color:#111;font-weight:normal;transform:translateY(-50%) scaleX(0.93);transform-origin:0 50%;">FSN - 2</div>
<div style="position:absolute;left:508.30px;top:310.60px;width:20.95px;height:10.28px;background:#fcf2c4;"></div>
<div style="position:absolute;left:518.77px;top:316.94px;white-space:nowrap;font-size:8px;line-height:1;color:#1a1a1a;font-weight:normal;transform:translate(-50%,-50%) scaleX(0.88);">FSLL</div>
<div style="position:absolute;left:529.25px;top:310.60px;width:20.95px;height:10.28px;background:#fcf2c4;"></div>
<div style="position:absolute;left:539.73px;top:316.94px;white-space:nowrap;font-size:8px;line-height:1;color:#1a1a1a;font-weight:normal;transform:translate(-50%,-50%) scaleX(0.88);">FSLL</div>
<div style="position:absolute;left:592.10px;top:310.60px;width:20.95px;height:10.28px;background:#a9d4e4;"></div>
<div style="position:absolute;left:602.58px;top:316.94px;white-space:nowrap;font-size:8px;line-height:1;color:#1a1a1a;font-weight:normal;transform:translate(-50%,-50%) scaleX(0.88);">SSLL</div>
<div style="position:absolute;left:613.05px;top:310.60px;width:20.95px;height:10.28px;background:#a9d4e4;"></div>
<div style="position:absolute;left:14.70px;top:320.88px;width:466.00px;height:10.28px;background:#c27a8b;"></div>
<div style="position:absolute;left:15.50px;top:327.22px;white-space:nowrap;font-size:7.6px;line-height:1;color:#111;font-weight:normal;transform:translateY(-50%) scaleX(0.93);transform-origin:0 50%;">S0013</div>
<div style="position:absolute;left:53.00px;top:327.22px;white-space:nowrap;font-size:7.6px;line-height:1;color:#111;font-weight:normal;transform:translateY(-50%) scaleX(0.93);transform-origin:0 50%;">Jan Bauer</div>
<div style="position:absolute;left:143.50px;top:327.22px;white-space:nowrap;font-size:7.6px;line-height:1;color:#111;font-weight:normal;transform:translateY(-50%) scaleX(0.93);transform-origin:0 50%;">Shift Line Leader</div>
<div style="position:absolute;left:233.50px;top:327.22px;white-space:nowrap;font-size:7.6px;line-height:1;color:#111;font-weight:normal;transform:translateY(-50%) scaleX(0.93);transform-origin:0 50%;">fest</div>
<div style="position:absolute;left:270.50px;top:327.22px;white-space:nowrap;font-size:5.7px;line-height:1;color:#111;font-weight:normal;transform:translateY(-50%) scaleX(0.9);transform-origin:0 50%;">Hauptmontage</div>
<div style="position:absolute;left:308.00px;top:327.22px;white-space:nowrap;font-size:7.6px;line-height:1;color:#111;font-weight:normal;transform:translateY(-50%) scaleX(0.93);transform-origin:0 50%;">31.12.99</div>
<div style="position:absolute;left:350.50px;top:327.22px;white-space:nowrap;font-size:7.6px;line-height:1;color:#111;font-weight:normal;transform:translateY(-50%) scaleX(0.93);transform-origin:0 50%;">KST16</div>
<div style="position:absolute;left:391.50px;top:327.22px;white-space:nowrap;font-size:7.6px;line-height:1;color:#111;font-weight:normal;transform:translateY(-50%) scaleX(0.93);transform-origin:0 50%;">FSN - 3</div>
<div style="position:absolute;left:508.30px;top:320.88px;width:20.95px;height:10.28px;background:#a9d4e4;"></div>
<div style="position:absolute;left:518.77px;top:327.22px;white-space:nowrap;font-size:8px;line-height:1;color:#1a1a1a;font-weight:normal;transform:translate(-50%,-50%) scaleX(0.88);">SSLL</div>
<div style="position:absolute;left:529.25px;top:320.88px;width:20.95px;height:10.28px;background:#a9d4e4;"></div>
<div style="position:absolute;left:539.73px;top:327.22px;white-space:nowrap;font-size:8px;line-height:1;color:#1a1a1a;font-weight:normal;transform:translate(-50%,-50%) scaleX(0.88);">SSLL</div>
<div style="position:absolute;left:571.15px;top:320.88px;width:20.95px;height:10.28px;background:#5c8de3;"></div>
<div style="position:absolute;left:581.62px;top:327.22px;white-space:nowrap;font-size:8px;line-height:1;color:#1a1a1a;font-weight:normal;transform:translate(-50%,-50%) scaleX(0.88);">U</div>
<div style="position:absolute;left:592.10px;top:320.88px;width:20.95px;height:10.28px;background:#5c8de3;"></div>
<div style="position:absolute;left:602.58px;top:327.22px;white-space:nowrap;font-size:8px;line-height:1;color:#1a1a1a;font-weight:normal;transform:translate(-50%,-50%) scaleX(0.88);">U</div>
<div style="position:absolute;left:613.05px;top:320.88px;width:20.95px;height:10.28px;background:#5c8de3;"></div>
<div style="position:absolute;left:1011.10px;top:320.88px;width:20.95px;height:10.28px;background:#20a69a;"></div>
<div style="position:absolute;left:1021.57px;top:327.22px;white-space:nowrap;font-size:8px;line-height:1;color:#1a1a1a;font-weight:normal;transform:translate(-50%,-50%) scaleX(0.88);">NS</div>
<div style="position:absolute;left:14.70px;top:331.16px;width:466.00px;height:10.28px;background:#45ad4d;"></div>
<div style="position:absolute;left:15.50px;top:337.50px;white-space:nowrap;font-size:7.6px;line-height:1;color:#111;font-weight:normal;transform:translateY(-50%) scaleX(0.93);transform-origin:0 50%;">W2020</div>
<div style="position:absolute;left:53.00px;top:337.50px;white-space:nowrap;font-size:7.6px;line-height:1;color:#111;font-weight:normal;transform:translateY(-50%) scaleX(0.93);transform-origin:0 50%;">Katrin Bauer</div>
<div style="position:absolute;left:143.50px;top:337.50px;white-space:nowrap;font-size:7.6px;line-height:1;color:#111;font-weight:normal;transform:translateY(-50%) scaleX(0.93);transform-origin:0 50%;">Werker</div>
<div style="position:absolute;left:233.50px;top:337.50px;white-space:nowrap;font-size:7.6px;line-height:1;color:#111;font-weight:normal;transform:translateY(-50%) scaleX(0.93);transform-origin:0 50%;">fest</div>
<div style="position:absolute;left:270.50px;top:337.50px;white-space:nowrap;font-size:5.7px;line-height:1;color:#111;font-weight:normal;transform:translateY(-50%) scaleX(0.9);transform-origin:0 50%;">Hauptmontage</div>
<div style="position:absolute;left:308.00px;top:337.50px;white-space:nowrap;font-size:7.6px;line-height:1;color:#111;font-weight:normal;transform:translateY(-50%) scaleX(0.93);transform-origin:0 50%;">31.12.99</div>
<div style="position:absolute;left:350.50px;top:337.50px;white-space:nowrap;font-size:7.6px;line-height:1;color:#111;font-weight:normal;transform:translateY(-50%) scaleX(0.93);transform-origin:0 50%;">KST16</div>
<div style="position:absolute;left:391.50px;top:337.50px;white-space:nowrap;font-size:7.6px;line-height:1;color:#111;font-weight:normal;transform:translateY(-50%) scaleX(0.93);transform-origin:0 50%;">FSN - 1</div>
<div style="position:absolute;left:508.30px;top:331.16px;width:20.95px;height:10.28px;background:#20a69a;"></div>
<div style="position:absolute;left:518.77px;top:337.50px;white-space:nowrap;font-size:8px;line-height:1;color:#1a1a1a;font-weight:normal;transform:translate(-50%,-50%) scaleX(0.88);">NW</div>
<div style="position:absolute;left:592.10px;top:331.16px;width:20.95px;height:10.28px;background:#fcf2c4;"></div>
<div style="position:absolute;left:602.58px;top:337.50px;white-space:nowrap;font-size:8px;line-height:1;color:#1a1a1a;font-weight:normal;transform:translate(-50%,-50%) scaleX(0.88);">FW</div>
<div style="position:absolute;left:613.05px;top:331.16px;width:20.95px;height:10.28px;background:#fcf2c4;"></div>
<div style="position:absolute;left:14.70px;top:341.44px;width:466.00px;height:10.28px;background:#45ad4d;"></div>
<div style="position:absolute;left:15.50px;top:347.78px;white-space:nowrap;font-size:7.6px;line-height:1;color:#111;font-weight:normal;transform:translateY(-50%) scaleX(0.93);transform-origin:0 50%;">W2011</div>
<div style="position:absolute;left:53.00px;top:347.78px;white-space:nowrap;font-size:7.6px;line-height:1;color:#111;font-weight:normal;transform:translateY(-50%) scaleX(0.93);transform-origin:0 50%;">Nadine Braun</div>
<div style="position:absolute;left:143.50px;top:347.78px;white-space:nowrap;font-size:7.6px;line-height:1;color:#111;font-weight:normal;transform:translateY(-50%) scaleX(0.93);transform-origin:0 50%;">Werker</div>
<div style="position:absolute;left:233.50px;top:347.78px;white-space:nowrap;font-size:7.6px;line-height:1;color:#111;font-weight:normal;transform:translateY(-50%) scaleX(0.93);transform-origin:0 50%;">fest</div>
<div style="position:absolute;left:270.50px;top:347.78px;white-space:nowrap;font-size:5.7px;line-height:1;color:#111;font-weight:normal;transform:translateY(-50%) scaleX(0.9);transform-origin:0 50%;">Hauptmontage</div>
<div style="position:absolute;left:308.00px;top:347.78px;white-space:nowrap;font-size:7.6px;line-height:1;color:#111;font-weight:normal;transform:translateY(-50%) scaleX(0.93);transform-origin:0 50%;">31.12.99</div>
<div style="position:absolute;left:350.50px;top:347.78px;white-space:nowrap;font-size:7.6px;line-height:1;color:#111;font-weight:normal;transform:translateY(-50%) scaleX(0.93);transform-origin:0 50%;">KST16</div>
<div style="position:absolute;left:391.50px;top:347.78px;white-space:nowrap;font-size:7.6px;line-height:1;color:#111;font-weight:normal;transform:translateY(-50%) scaleX(0.93);transform-origin:0 50%;">FSN - 1</div>
<div style="position:absolute;left:508.30px;top:341.44px;width:20.95px;height:10.28px;background:#20a69a;"></div>
<div style="position:absolute;left:518.77px;top:347.78px;white-space:nowrap;font-size:8px;line-height:1;color:#1a1a1a;font-weight:normal;transform:translate(-50%,-50%) scaleX(0.88);">NW</div>
<div style="position:absolute;left:592.10px;top:341.44px;width:20.95px;height:10.28px;background:#5c8de3;"></div>
<div style="position:absolute;left:602.58px;top:347.78px;white-space:nowrap;font-size:8px;line-height:1;color:#1a1a1a;font-weight:normal;transform:translate(-50%,-50%) scaleX(0.88);">U</div>
<div style="position:absolute;left:613.05px;top:341.44px;width:20.95px;height:10.28px;background:#5c8de3;"></div>
<div style="position:absolute;left:14.70px;top:351.72px;width:466.00px;height:10.28px;background:#45ad4d;"></div>
<div style="position:absolute;left:15.50px;top:358.06px;white-space:nowrap;font-size:7.6px;line-height:1;color:#111;font-weight:normal;transform:translateY(-50%) scaleX(0.93);transform-origin:0 50%;">W2014</div>
<div style="position:absolute;left:53.00px;top:358.06px;white-space:nowrap;font-size:7.6px;line-height:1;color:#111;font-weight:normal;transform:translateY(-50%) scaleX(0.93);transform-origin:0 50%;">Lisa Klein</div>
<div style="position:absolute;left:143.50px;top:358.06px;white-space:nowrap;font-size:7.6px;line-height:1;color:#111;font-weight:normal;transform:translateY(-50%) scaleX(0.93);transform-origin:0 50%;">Werker</div>
<div style="position:absolute;left:233.50px;top:358.06px;white-space:nowrap;font-size:7.6px;line-height:1;color:#111;font-weight:normal;transform:translateY(-50%) scaleX(0.93);transform-origin:0 50%;">fest</div>
<div style="position:absolute;left:270.50px;top:358.06px;white-space:nowrap;font-size:5.7px;line-height:1;color:#111;font-weight:normal;transform:translateY(-50%) scaleX(0.9);transform-origin:0 50%;">Hauptmontage</div>
<div style="position:absolute;left:308.00px;top:358.06px;white-space:nowrap;font-size:7.6px;line-height:1;color:#111;font-weight:normal;transform:translateY(-50%) scaleX(0.93);transform-origin:0 50%;">31.12.99</div>
<div style="position:absolute;left:350.50px;top:358.06px;white-space:nowrap;font-size:7.6px;line-height:1;color:#111;font-weight:normal;transform:translateY(-50%) scaleX(0.93);transform-origin:0 50%;">KST16</div>
<div style="position:absolute;left:391.50px;top:358.06px;white-space:nowrap;font-size:7.6px;line-height:1;color:#111;font-weight:normal;transform:translateY(-50%) scaleX(0.93);transform-origin:0 50%;">FSN - 1</div>
<div style="position:absolute;left:508.30px;top:351.72px;width:20.95px;height:10.28px;background:#20a69a;"></div>
<div style="position:absolute;left:518.77px;top:358.06px;white-space:nowrap;font-size:8px;line-height:1;color:#1a1a1a;font-weight:normal;transform:translate(-50%,-50%) scaleX(0.88);">NW</div>
<div style="position:absolute;left:592.10px;top:351.72px;width:20.95px;height:10.28px;background:#fcf2c4;"></div>
<div style="position:absolute;left:602.58px;top:358.06px;white-space:nowrap;font-size:8px;line-height:1;color:#1a1a1a;font-weight:normal;transform:translate(-50%,-50%) scaleX(0.88);">FW</div>
<div style="position:absolute;left:613.05px;top:351.72px;width:20.95px;height:10.28px;background:#fcf2c4;"></div>
<div style="position:absolute;left:14.70px;top:362.00px;width:466.00px;height:10.28px;background:#45ad4d;"></div>
<div style="position:absolute;left:15.50px;top:368.34px;white-space:nowrap;font-size:7.6px;line-height:1;color:#111;font-weight:normal;transform:translateY(-50%) scaleX(0.93);transform-origin:0 50%;">W2017</div>
<div style="position:absolute;left:53.00px;top:368.34px;white-space:nowrap;font-size:7.6px;line-height:1;color:#111;font-weight:normal;transform:translateY(-50%) scaleX(0.93);transform-origin:0 50%;">Nina Lorenz</div>
<div style="position:absolute;left:143.50px;top:368.34px;white-space:nowrap;font-size:7.6px;line-height:1;color:#111;font-weight:normal;transform:translateY(-50%) scaleX(0.93);transform-origin:0 50%;">Werker</div>
<div style="position:absolute;left:233.50px;top:368.34px;white-space:nowrap;font-size:7.6px;line-height:1;color:#111;font-weight:normal;transform:translateY(-50%) scaleX(0.93);transform-origin:0 50%;">fest</div>
<div style="position:absolute;left:270.50px;top:368.34px;white-space:nowrap;font-size:5.7px;line-height:1;color:#111;font-weight:normal;transform:translateY(-50%) scaleX(0.9);transform-origin:0 50%;">Hauptmontage</div>
<div style="position:absolute;left:308.00px;top:368.34px;white-space:nowrap;font-size:7.6px;line-height:1;color:#111;font-weight:normal;transform:translateY(-50%) scaleX(0.93);transform-origin:0 50%;">31.12.99</div>
<div style="position:absolute;left:350.50px;top:368.34px;white-space:nowrap;font-size:7.6px;line-height:1;color:#111;font-weight:normal;transform:translateY(-50%) scaleX(0.93);transform-origin:0 50%;">KST16</div>
<div style="position:absolute;left:391.50px;top:368.34px;white-space:nowrap;font-size:7.6px;line-height:1;color:#111;font-weight:normal;transform:translateY(-50%) scaleX(0.93);transform-origin:0 50%;">FSN - 1</div>
<div style="position:absolute;left:508.30px;top:362.00px;width:20.95px;height:10.28px;background:#20a69a;"></div>
<div style="position:absolute;left:518.77px;top:368.34px;white-space:nowrap;font-size:8px;line-height:1;color:#1a1a1a;font-weight:normal;transform:translate(-50%,-50%) scaleX(0.88);">NW</div>
<div style="position:absolute;left:592.10px;top:362.00px;width:20.95px;height:10.28px;background:#fcf2c4;"></div>
<div style="position:absolute;left:602.58px;top:368.34px;white-space:nowrap;font-size:8px;line-height:1;color:#1a1a1a;font-weight:normal;transform:translate(-50%,-50%) scaleX(0.88);">FW</div>
<div style="position:absolute;left:613.05px;top:362.00px;width:20.95px;height:10.28px;background:#fcf2c4;"></div>
<div style="position:absolute;left:14.70px;top:372.28px;width:466.00px;height:10.28px;background:#45ad4d;"></div>
<div style="position:absolute;left:15.50px;top:378.62px;white-space:nowrap;font-size:7.6px;line-height:1;color:#111;font-weight:normal;transform:translateY(-50%) scaleX(0.93);transform-origin:0 50%;">W2040</div>
<div style="position:absolute;left:53.00px;top:378.62px;white-space:nowrap;font-size:7.6px;line-height:1;color:#111;font-weight:normal;transform:translateY(-50%) scaleX(0.93);transform-origin:0 50%;">Nina Braun</div>
<div style="position:absolute;left:143.50px;top:378.62px;white-space:nowrap;font-size:7.6px;line-height:1;color:#111;font-weight:normal;transform:translateY(-50%) scaleX(0.93);transform-origin:0 50%;">Werker</div>
<div style="position:absolute;left:233.50px;top:378.62px;white-space:nowrap;font-size:7.6px;line-height:1;color:#111;font-weight:normal;transform:translateY(-50%) scaleX(0.93);transform-origin:0 50%;">fest</div>
<div style="position:absolute;left:270.50px;top:378.62px;white-space:nowrap;font-size:5.7px;line-height:1;color:#111;font-weight:normal;transform:translateY(-50%) scaleX(0.9);transform-origin:0 50%;">Hauptmontage</div>
<div style="position:absolute;left:308.00px;top:378.62px;white-space:nowrap;font-size:7.6px;line-height:1;color:#111;font-weight:normal;transform:translateY(-50%) scaleX(0.93);transform-origin:0 50%;">31.12.99</div>
<div style="position:absolute;left:350.50px;top:378.62px;white-space:nowrap;font-size:7.6px;line-height:1;color:#111;font-weight:normal;transform:translateY(-50%) scaleX(0.93);transform-origin:0 50%;">KST16</div>
<div style="position:absolute;left:391.50px;top:378.62px;white-space:nowrap;font-size:7.6px;line-height:1;color:#111;font-weight:normal;transform:translateY(-50%) scaleX(0.93);transform-origin:0 50%;">FSN - 2</div>
<div style="position:absolute;left:508.30px;top:372.28px;width:20.95px;height:10.28px;background:#fcf2c4;"></div>
<div style="position:absolute;left:518.77px;top:378.62px;white-space:nowrap;font-size:8px;line-height:1;color:#1a1a1a;font-weight:normal;transform:translate(-50%,-50%) scaleX(0.88);">FW</div>
<div style="position:absolute;left:529.25px;top:372.28px;width:20.95px;height:10.28px;background:#fcf2c4;"></div>
<div style="position:absolute;left:539.73px;top:378.62px;white-space:nowrap;font-size:8px;line-height:1;color:#1a1a1a;font-weight:normal;transform:translate(-50%,-50%) scaleX(0.88);">FW</div>
<div style="position:absolute;left:592.10px;top:372.28px;width:20.95px;height:10.28px;background:#a9d4e4;"></div>
<div style="position:absolute;left:602.58px;top:378.62px;white-space:nowrap;font-size:8px;line-height:1;color:#1a1a1a;font-weight:normal;transform:translate(-50%,-50%) scaleX(0.88);">SW</div>
<div style="position:absolute;left:613.05px;top:372.28px;width:20.95px;height:10.28px;background:#a9d4e4;"></div>
<div style="position:absolute;left:14.70px;top:382.56px;width:466.00px;height:10.28px;background:#45ad4d;"></div>
<div style="position:absolute;left:15.50px;top:388.90px;white-space:nowrap;font-size:7.6px;line-height:1;color:#111;font-weight:normal;transform:translateY(-50%) scaleX(0.93);transform-origin:0 50%;">W2012</div>
<div style="position:absolute;left:53.00px;top:388.90px;white-space:nowrap;font-size:7.6px;line-height:1;color:#111;font-weight:normal;transform:translateY(-50%) scaleX(0.93);transform-origin:0 50%;">Simon Hartmann</div>
<div style="position:absolute;left:143.50px;top:388.90px;white-space:nowrap;font-size:7.6px;line-height:1;color:#111;font-weight:normal;transform:translateY(-50%) scaleX(0.93);transform-origin:0 50%;">Werker</div>
<div style="position:absolute;left:233.50px;top:388.90px;white-space:nowrap;font-size:7.6px;line-height:1;color:#111;font-weight:normal;transform:translateY(-50%) scaleX(0.93);transform-origin:0 50%;">fest</div>
<div style="position:absolute;left:270.50px;top:388.90px;white-space:nowrap;font-size:5.7px;line-height:1;color:#111;font-weight:normal;transform:translateY(-50%) scaleX(0.9);transform-origin:0 50%;">Hauptmontage</div>
<div style="position:absolute;left:308.00px;top:388.90px;white-space:nowrap;font-size:7.6px;line-height:1;color:#111;font-weight:normal;transform:translateY(-50%) scaleX(0.93);transform-origin:0 50%;">31.12.99</div>
<div style="position:absolute;left:350.50px;top:388.90px;white-space:nowrap;font-size:7.6px;line-height:1;color:#111;font-weight:normal;transform:translateY(-50%) scaleX(0.93);transform-origin:0 50%;">KST16</div>
<div style="position:absolute;left:391.50px;top:388.90px;white-space:nowrap;font-size:7.6px;line-height:1;color:#111;font-weight:normal;transform:translateY(-50%) scaleX(0.93);transform-origin:0 50%;">FSN - 2</div>
<div style="position:absolute;left:508.30px;top:382.56px;width:20.95px;height:10.28px;background:#fcf2c4;"></div>
<div style="position:absolute;left:518.77px;top:388.90px;white-space:nowrap;font-size:8px;line-height:1;color:#1a1a1a;font-weight:normal;transform:translate(-50%,-50%) scaleX(0.88);">FW</div>
<div style="position:absolute;left:529.25px;top:382.56px;width:20.95px;height:10.28px;background:#fcf2c4;"></div>
<div style="position:absolute;left:539.73px;top:388.90px;white-space:nowrap;font-size:8px;line-height:1;color:#1a1a1a;font-weight:normal;transform:translate(-50%,-50%) scaleX(0.88);">FW</div>
<div style="position:absolute;left:592.10px;top:382.56px;width:20.95px;height:10.28px;background:#5c8de3;"></div>
<div style="position:absolute;left:602.58px;top:388.90px;white-space:nowrap;font-size:8px;line-height:1;color:#1a1a1a;font-weight:normal;transform:translate(-50%,-50%) scaleX(0.88);">U</div>
<div style="position:absolute;left:613.05px;top:382.56px;width:20.95px;height:10.28px;background:#5c8de3;"></div>
<div style="position:absolute;left:14.70px;top:392.84px;width:466.00px;height:10.28px;background:#45ad4d;"></div>
<div style="position:absolute;left:15.50px;top:399.18px;white-space:nowrap;font-size:7.6px;line-height:1;color:#111;font-weight:normal;transform:translateY(-50%) scaleX(0.93);transform-origin:0 50%;">W2015</div>
<div style="position:absolute;left:53.00px;top:399.18px;white-space:nowrap;font-size:7.6px;line-height:1;color:#111;font-weight:normal;transform:translateY(-50%) scaleX(0.93);transform-origin:0 50%;">Tobias Schmid</div>
<div style="position:absolute;left:143.50px;top:399.18px;white-space:nowrap;font-size:7.6px;line-height:1;color:#111;font-weight:normal;transform:translateY(-50%) scaleX(0.93);transform-origin:0 50%;">Werker</div>
<div style="position:absolute;left:233.50px;top:399.18px;white-space:nowrap;font-size:7.6px;line-height:1;color:#111;font-weight:normal;transform:translateY(-50%) scaleX(0.93);transform-origin:0 50%;">fest</div>
<div style="position:absolute;left:270.50px;top:399.18px;white-space:nowrap;font-size:5.7px;line-height:1;color:#111;font-weight:normal;transform:translateY(-50%) scaleX(0.9);transform-origin:0 50%;">Hauptmontage</div>
<div style="position:absolute;left:308.00px;top:399.18px;white-space:nowrap;font-size:7.6px;line-height:1;color:#111;font-weight:normal;transform:translateY(-50%) scaleX(0.93);transform-origin:0 50%;">31.12.99</div>
<div style="position:absolute;left:350.50px;top:399.18px;white-space:nowrap;font-size:7.6px;line-height:1;color:#111;font-weight:normal;transform:translateY(-50%) scaleX(0.93);transform-origin:0 50%;">KST16</div>
<div style="position:absolute;left:391.50px;top:399.18px;white-space:nowrap;font-size:7.6px;line-height:1;color:#111;font-weight:normal;transform:translateY(-50%) scaleX(0.93);transform-origin:0 50%;">FSN - 2</div>
<div style="position:absolute;left:508.30px;top:392.84px;width:20.95px;height:10.28px;background:#fcf2c4;"></div>
<div style="position:absolute;left:518.77px;top:399.18px;white-space:nowrap;font-size:8px;line-height:1;color:#1a1a1a;font-weight:normal;transform:translate(-50%,-50%) scaleX(0.88);">FW</div>
<div style="position:absolute;left:529.25px;top:392.84px;width:20.95px;height:10.28px;background:#fcf2c4;"></div>
<div style="position:absolute;left:539.73px;top:399.18px;white-space:nowrap;font-size:8px;line-height:1;color:#1a1a1a;font-weight:normal;transform:translate(-50%,-50%) scaleX(0.88);">FW</div>
<div style="position:absolute;left:592.10px;top:392.84px;width:20.95px;height:10.28px;background:#a9d4e4;"></div>
<div style="position:absolute;left:602.58px;top:399.18px;white-space:nowrap;font-size:8px;line-height:1;color:#1a1a1a;font-weight:normal;transform:translate(-50%,-50%) scaleX(0.88);">SW</div>
<div style="position:absolute;left:613.05px;top:392.84px;width:20.95px;height:10.28px;background:#a9d4e4;"></div>
<div style="position:absolute;left:14.70px;top:403.12px;width:466.00px;height:10.28px;background:#45ad4d;"></div>
<div style="position:absolute;left:15.50px;top:409.46px;white-space:nowrap;font-size:7.6px;line-height:1;color:#111;font-weight:normal;transform:translateY(-50%) scaleX(0.93);transform-origin:0 50%;">W2018</div>
<div style="position:absolute;left:53.00px;top:409.46px;white-space:nowrap;font-size:7.6px;line-height:1;color:#111;font-weight:normal;transform:translateY(-50%) scaleX(0.93);transform-origin:0 50%;">Laura Schuster</div>
<div style="position:absolute;left:143.50px;top:409.46px;white-space:nowrap;font-size:7.6px;line-height:1;color:#111;font-weight:normal;transform:translateY(-50%) scaleX(0.93);transform-origin:0 50%;">Werker</div>
<div style="position:absolute;left:233.50px;top:409.46px;white-space:nowrap;font-size:7.6px;line-height:1;color:#111;font-weight:normal;transform:translateY(-50%) scaleX(0.93);transform-origin:0 50%;">fest</div>
<div style="position:absolute;left:270.50px;top:409.46px;white-space:nowrap;font-size:5.7px;line-height:1;color:#111;font-weight:normal;transform:translateY(-50%) scaleX(0.9);transform-origin:0 50%;">Hauptmontage</div>
<div style="position:absolute;left:308.00px;top:409.46px;white-space:nowrap;font-size:7.6px;line-height:1;color:#111;font-weight:normal;transform:translateY(-50%) scaleX(0.93);transform-origin:0 50%;">31.12.99</div>
<div style="position:absolute;left:350.50px;top:409.46px;white-space:nowrap;font-size:7.6px;line-height:1;color:#111;font-weight:normal;transform:translateY(-50%) scaleX(0.93);transform-origin:0 50%;">KST16</div>
<div style="position:absolute;left:391.50px;top:409.46px;white-space:nowrap;font-size:7.6px;line-height:1;color:#111;font-weight:normal;transform:translateY(-50%) scaleX(0.93);transform-origin:0 50%;">FSN - 2</div>
<div style="position:absolute;left:508.30px;top:403.12px;width:20.95px;height:10.28px;background:#fcf2c4;"></div>
<div style="position:absolute;left:518.77px;top:409.46px;white-space:nowrap;font-size:8px;line-height:1;color:#1a1a1a;font-weight:normal;transform:translate(-50%,-50%) scaleX(0.88);">FW</div>
<div style="position:absolute;left:529.25px;top:403.12px;width:20.95px;height:10.28px;background:#fcf2c4;"></div>
<div style="position:absolute;left:539.73px;top:409.46px;white-space:nowrap;font-size:8px;line-height:1;color:#1a1a1a;font-weight:normal;transform:translate(-50%,-50%) scaleX(0.88);">FW</div>
<div style="position:absolute;left:592.10px;top:403.12px;width:20.95px;height:10.28px;background:#a9d4e4;"></div>
<div style="position:absolute;left:602.58px;top:409.46px;white-space:nowrap;font-size:8px;line-height:1;color:#1a1a1a;font-weight:normal;transform:translate(-50%,-50%) scaleX(0.88);">SW</div>
<div style="position:absolute;left:613.05px;top:403.12px;width:20.95px;height:10.28px;background:#a9d4e4;"></div>
<div style="position:absolute;left:14.70px;top:413.40px;width:466.00px;height:10.28px;background:#45ad4d;"></div>
<div style="position:absolute;left:15.50px;top:419.74px;white-space:nowrap;font-size:7.6px;line-height:1;color:#111;font-weight:normal;transform:translateY(-50%) scaleX(0.93);transform-origin:0 50%;">W2019</div>
<div style="position:absolute;left:53.00px;top:419.74px;white-space:nowrap;font-size:7.6px;line-height:1;color:#111;font-weight:normal;transform:translateY(-50%) scaleX(0.93);transform-origin:0 50%;">Simon Braun</div>
<div style="position:absolute;left:143.50px;top:419.74px;white-space:nowrap;font-size:7.6px;line-height:1;color:#111;font-weight:normal;transform:translateY(-50%) scaleX(0.93);transform-origin:0 50%;">Werker</div>
<div style="position:absolute;left:233.50px;top:419.74px;white-space:nowrap;font-size:7.6px;line-height:1;color:#111;font-weight:normal;transform:translateY(-50%) scaleX(0.93);transform-origin:0 50%;">fest</div>
<div style="position:absolute;left:270.50px;top:419.74px;white-space:nowrap;font-size:5.7px;line-height:1;color:#111;font-weight:normal;transform:translateY(-50%) scaleX(0.9);transform-origin:0 50%;">Hauptmontage</div>
<div style="position:absolute;left:308.00px;top:419.74px;white-space:nowrap;font-size:7.6px;line-height:1;color:#111;font-weight:normal;transform:translateY(-50%) scaleX(0.93);transform-origin:0 50%;">31.12.99</div>
<div style="position:absolute;left:350.50px;top:419.74px;white-space:nowrap;font-size:7.6px;line-height:1;color:#111;font-weight:normal;transform:translateY(-50%) scaleX(0.93);transform-origin:0 50%;">KST16</div>
<div style="position:absolute;left:391.50px;top:419.74px;white-space:nowrap;font-size:7.6px;line-height:1;color:#111;font-weight:normal;transform:translateY(-50%) scaleX(0.93);transform-origin:0 50%;">FSN - 3</div>
<div style="position:absolute;left:508.30px;top:413.40px;width:20.95px;height:10.28px;background:#a9d4e4;"></div>
<div style="position:absolute;left:518.77px;top:419.74px;white-space:nowrap;font-size:8px;line-height:1;color:#1a1a1a;font-weight:normal;transform:translate(-50%,-50%) scaleX(0.88);">SW</div>
<div style="position:absolute;left:529.25px;top:413.40px;width:20.95px;height:10.28px;background:#a9d4e4;"></div>
<div style="position:absolute;left:539.73px;top:419.74px;white-space:nowrap;font-size:8px;line-height:1;color:#1a1a1a;font-weight:normal;transform:translate(-50%,-50%) scaleX(0.88);">SW</div>
<div style="position:absolute;left:571.15px;top:413.40px;width:20.95px;height:10.28px;background:#20a69a;"></div>
<div style="position:absolute;left:581.62px;top:419.74px;white-space:nowrap;font-size:8px;line-height:1;color:#1a1a1a;font-weight:normal;transform:translate(-50%,-50%) scaleX(0.88);">NW</div>
<div style="position:absolute;left:592.10px;top:413.40px;width:20.95px;height:10.28px;background:#20a69a;"></div>
<div style="position:absolute;left:602.58px;top:419.74px;white-space:nowrap;font-size:8px;line-height:1;color:#1a1a1a;font-weight:normal;transform:translate(-50%,-50%) scaleX(0.88);">NW</div>
<div style="position:absolute;left:613.05px;top:413.40px;width:20.95px;height:10.28px;background:#20a69a;"></div>
<div style="position:absolute;left:1011.10px;top:413.40px;width:20.95px;height:10.28px;background:#20a69a;"></div>
<div style="position:absolute;left:1021.57px;top:419.74px;white-space:nowrap;font-size:8px;line-height:1;color:#1a1a1a;font-weight:normal;transform:translate(-50%,-50%) scaleX(0.88);">NW</div>
<div style="position:absolute;left:14.70px;top:423.68px;width:466.00px;height:10.28px;background:#45ad4d;"></div>
<div style="position:absolute;left:15.50px;top:430.02px;white-space:nowrap;font-size:7.6px;line-height:1;color:#111;font-weight:normal;transform:translateY(-50%) scaleX(0.93);transform-origin:0 50%;">W2016</div>
<div style="position:absolute;left:53.00px;top:430.02px;white-space:nowrap;font-size:7.6px;line-height:1;color:#111;font-weight:normal;transform:translateY(-50%) scaleX(0.93);transform-origin:0 50%;">Lisa Schmid</div>
<div style="position:absolute;left:143.50px;top:430.02px;white-space:nowrap;font-size:7.6px;line-height:1;color:#111;font-weight:normal;transform:translateY(-50%) scaleX(0.93);transform-origin:0 50%;">Werker</div>
<div style="position:absolute;left:233.50px;top:430.02px;white-space:nowrap;font-size:7.6px;line-height:1;color:#111;font-weight:normal;transform:translateY(-50%) scaleX(0.93);transform-origin:0 50%;">fest</div>
<div style="position:absolute;left:270.50px;top:430.02px;white-space:nowrap;font-size:5.7px;line-height:1;color:#111;font-weight:normal;transform:translateY(-50%) scaleX(0.9);transform-origin:0 50%;">Hauptmontage</div>
<div style="position:absolute;left:308.00px;top:430.02px;white-space:nowrap;font-size:7.6px;line-height:1;color:#111;font-weight:normal;transform:translateY(-50%) scaleX(0.93);transform-origin:0 50%;">31.12.99</div>
<div style="position:absolute;left:350.50px;top:430.02px;white-space:nowrap;font-size:7.6px;line-height:1;color:#111;font-weight:normal;transform:translateY(-50%) scaleX(0.93);transform-origin:0 50%;">KST16</div>
<div style="position:absolute;left:391.50px;top:430.02px;white-space:nowrap;font-size:7.6px;line-height:1;color:#111;font-weight:normal;transform:translateY(-50%) scaleX(0.93);transform-origin:0 50%;">FSN - 3</div>
<div style="position:absolute;left:508.30px;top:423.68px;width:20.95px;height:10.28px;background:#a9d4e4;"></div>
<div style="position:absolute;left:518.77px;top:430.02px;white-space:nowrap;font-size:8px;line-height:1;color:#1a1a1a;font-weight:normal;transform:translate(-50%,-50%) scaleX(0.88);">SW</div>
<div style="position:absolute;left:529.25px;top:423.68px;width:20.95px;height:10.28px;background:#a9d4e4;"></div>
<div style="position:absolute;left:539.73px;top:430.02px;white-space:nowrap;font-size:8px;line-height:1;color:#1a1a1a;font-weight:normal;transform:translate(-50%,-50%) scaleX(0.88);">SW</div>
<div style="position:absolute;left:571.15px;top:423.68px;width:20.95px;height:10.28px;background:#20a69a;"></div>
<div style="position:absolute;left:581.62px;top:430.02px;white-space:nowrap;font-size:8px;line-height:1;color:#1a1a1a;font-weight:normal;transform:translate(-50%,-50%) scaleX(0.88);">NW</div>
<div style="position:absolute;left:592.10px;top:423.68px;width:20.95px;height:10.28px;background:#20a69a;"></div>
<div style="position:absolute;left:602.58px;top:430.02px;white-space:nowrap;font-size:8px;line-height:1;color:#1a1a1a;font-weight:normal;transform:translate(-50%,-50%) scaleX(0.88);">NW</div>
<div style="position:absolute;left:613.05px;top:423.68px;width:20.95px;height:10.28px;background:#20a69a;"></div>
<div style="position:absolute;left:1011.10px;top:423.68px;width:20.95px;height:10.28px;background:#5c8de3;"></div>
<div style="position:absolute;left:1021.57px;top:430.02px;white-space:nowrap;font-size:8px;line-height:1;color:#1a1a1a;font-weight:normal;transform:translate(-50%,-50%) scaleX(0.88);">U</div>
<div style="position:absolute;left:14.70px;top:433.96px;width:466.00px;height:10.28px;background:#45ad4d;"></div>
<div style="position:absolute;left:15.50px;top:440.30px;white-space:nowrap;font-size:7.6px;line-height:1;color:#111;font-weight:normal;transform:translateY(-50%) scaleX(0.93);transform-origin:0 50%;">W2013</div>
<div style="position:absolute;left:53.00px;top:440.30px;white-space:nowrap;font-size:7.6px;line-height:1;color:#111;font-weight:normal;transform:translateY(-50%) scaleX(0.93);transform-origin:0 50%;">Marc Zimmermann</div>
<div style="position:absolute;left:143.50px;top:440.30px;white-space:nowrap;font-size:7.6px;line-height:1;color:#111;font-weight:normal;transform:translateY(-50%) scaleX(0.93);transform-origin:0 50%;">Werker</div>
<div style="position:absolute;left:233.50px;top:440.30px;white-space:nowrap;font-size:7.6px;line-height:1;color:#111;font-weight:normal;transform:translateY(-50%) scaleX(0.93);transform-origin:0 50%;">fest</div>
<div style="position:absolute;left:270.50px;top:440.30px;white-space:nowrap;font-size:5.7px;line-height:1;color:#111;font-weight:normal;transform:translateY(-50%) scaleX(0.9);transform-origin:0 50%;">Hauptmontage</div>
<div style="position:absolute;left:308.00px;top:440.30px;white-space:nowrap;font-size:7.6px;line-height:1;color:#111;font-weight:normal;transform:translateY(-50%) scaleX(0.93);transform-origin:0 50%;">31.12.99</div>
<div style="position:absolute;left:350.50px;top:440.30px;white-space:nowrap;font-size:7.6px;line-height:1;color:#111;font-weight:normal;transform:translateY(-50%) scaleX(0.93);transform-origin:0 50%;">KST16</div>
<div style="position:absolute;left:391.50px;top:440.30px;white-space:nowrap;font-size:7.6px;line-height:1;color:#111;font-weight:normal;transform:translateY(-50%) scaleX(0.93);transform-origin:0 50%;">FSN - 3</div>
<div style="position:absolute;left:508.30px;top:433.96px;width:20.95px;height:10.28px;background:#a9d4e4;"></div>
<div style="position:absolute;left:518.77px;top:440.30px;white-space:nowrap;font-size:8px;line-height:1;color:#1a1a1a;font-weight:normal;transform:translate(-50%,-50%) scaleX(0.88);">SW</div>
<div style="position:absolute;left:529.25px;top:433.96px;width:20.95px;height:10.28px;background:#a9d4e4;"></div>
<div style="position:absolute;left:539.73px;top:440.30px;white-space:nowrap;font-size:8px;line-height:1;color:#1a1a1a;font-weight:normal;transform:translate(-50%,-50%) scaleX(0.88);">SW</div>
<div style="position:absolute;left:571.15px;top:433.96px;width:20.95px;height:10.28px;background:#20a69a;"></div>
<div style="position:absolute;left:581.62px;top:440.30px;white-space:nowrap;font-size:8px;line-height:1;color:#1a1a1a;font-weight:normal;transform:translate(-50%,-50%) scaleX(0.88);">NW</div>
<div style="position:absolute;left:592.10px;top:433.96px;width:20.95px;height:10.28px;background:#20a69a;"></div>
<div style="position:absolute;left:602.58px;top:440.30px;white-space:nowrap;font-size:8px;line-height:1;color:#1a1a1a;font-weight:normal;transform:translate(-50%,-50%) scaleX(0.88);">NW</div>
<div style="position:absolute;left:613.05px;top:433.96px;width:20.95px;height:10.28px;background:#20a69a;"></div>
<div style="position:absolute;left:1011.10px;top:433.96px;width:20.95px;height:10.28px;background:#20a69a;"></div>
<div style="position:absolute;left:1021.57px;top:440.30px;white-space:nowrap;font-size:8px;line-height:1;color:#1a1a1a;font-weight:normal;transform:translate(-50%,-50%) scaleX(0.88);">NW</div>
<div style="position:absolute;left:14.70px;top:269.08px;width:465.60px;height:0.80px;background:#404040;"></div>
<div style="position:absolute;left:483.00px;top:269.08px;width:541.00px;height:0.80px;background:#404040;"></div>
<div style="position:absolute;left:14.70px;top:279.36px;width:465.60px;height:0.80px;background:#404040;"></div>
<div style="position:absolute;left:483.00px;top:279.36px;width:541.00px;height:0.80px;background:#404040;"></div>
<div style="position:absolute;left:14.70px;top:289.64px;width:465.60px;height:0.80px;background:#404040;"></div>
<div style="position:absolute;left:483.00px;top:289.64px;width:541.00px;height:0.80px;background:#404040;"></div>
<div style="position:absolute;left:14.70px;top:299.92px;width:465.60px;height:0.80px;background:#404040;"></div>
<div style="position:absolute;left:483.00px;top:299.92px;width:541.00px;height:0.80px;background:#404040;"></div>
<div style="position:absolute;left:14.70px;top:310.20px;width:465.60px;height:0.80px;background:#404040;"></div>
<div style="position:absolute;left:483.00px;top:310.20px;width:541.00px;height:0.80px;background:#404040;"></div>
<div style="position:absolute;left:14.70px;top:320.48px;width:465.60px;height:0.80px;background:#404040;"></div>
<div style="position:absolute;left:483.00px;top:320.48px;width:541.00px;height:0.80px;background:#404040;"></div>
<div style="position:absolute;left:14.70px;top:330.76px;width:465.60px;height:0.80px;background:#404040;"></div>
<div style="position:absolute;left:483.00px;top:330.76px;width:541.00px;height:0.80px;background:#404040;"></div>
<div style="position:absolute;left:14.70px;top:341.04px;width:465.60px;height:0.80px;background:#404040;"></div>
<div style="position:absolute;left:483.00px;top:341.04px;width:541.00px;height:0.80px;background:#404040;"></div>
<div style="position:absolute;left:14.70px;top:351.32px;width:465.60px;height:0.80px;background:#404040;"></div>
<div style="position:absolute;left:483.00px;top:351.32px;width:541.00px;height:0.80px;background:#404040;"></div>
<div style="position:absolute;left:14.70px;top:361.60px;width:465.60px;height:0.80px;background:#404040;"></div>
<div style="position:absolute;left:483.00px;top:361.60px;width:541.00px;height:0.80px;background:#404040;"></div>
<div style="position:absolute;left:14.70px;top:371.88px;width:465.60px;height:0.80px;background:#404040;"></div>
<div style="position:absolute;left:483.00px;top:371.88px;width:541.00px;height:0.80px;background:#404040;"></div>
<div style="position:absolute;left:14.70px;top:382.16px;width:465.60px;height:0.80px;background:#404040;"></div>
<div style="position:absolute;left:483.00px;top:382.16px;width:541.00px;height:0.80px;background:#404040;"></div>
<div style="position:absolute;left:14.70px;top:392.44px;width:465.60px;height:0.80px;background:#404040;"></div>
<div style="position:absolute;left:483.00px;top:392.44px;width:541.00px;height:0.80px;background:#404040;"></div>
<div style="position:absolute;left:14.70px;top:402.72px;width:465.60px;height:0.80px;background:#404040;"></div>
<div style="position:absolute;left:483.00px;top:402.72px;width:541.00px;height:0.80px;background:#404040;"></div>
<div style="position:absolute;left:14.70px;top:413.00px;width:465.60px;height:0.80px;background:#404040;"></div>
<div style="position:absolute;left:483.00px;top:413.00px;width:541.00px;height:0.80px;background:#404040;"></div>
<div style="position:absolute;left:14.70px;top:423.28px;width:465.60px;height:0.80px;background:#404040;"></div>
<div style="position:absolute;left:483.00px;top:423.28px;width:541.00px;height:0.80px;background:#404040;"></div>
<div style="position:absolute;left:14.70px;top:433.56px;width:465.60px;height:0.80px;background:#404040;"></div>
<div style="position:absolute;left:483.00px;top:433.56px;width:541.00px;height:0.80px;background:#404040;"></div>
<div style="position:absolute;left:14.70px;top:443.84px;width:465.60px;height:0.80px;background:#404040;"></div>
<div style="position:absolute;left:483.00px;top:443.84px;width:541.00px;height:0.80px;background:#404040;"></div>
<div style="position:absolute;left:14.70px;top:453.92px;width:465.60px;height:1.20px;background:#bdbdbd;"></div>
<div style="position:absolute;left:483.00px;top:454.12px;width:541.00px;height:0.80px;background:#404040;"></div>
<div style="position:absolute;left:14.70px;top:464.40px;width:465.60px;height:0.80px;background:#404040;"></div>
<div style="position:absolute;left:483.00px;top:464.40px;width:541.00px;height:0.80px;background:#404040;"></div>
<div style="position:absolute;left:14.70px;top:474.68px;width:465.60px;height:0.80px;background:#404040;"></div>
<div style="position:absolute;left:483.00px;top:474.68px;width:541.00px;height:0.80px;background:#404040;"></div>
<div style="position:absolute;left:14.70px;top:484.96px;width:465.60px;height:0.80px;background:#404040;"></div>
<div style="position:absolute;left:483.00px;top:484.96px;width:541.00px;height:0.80px;background:#404040;"></div>
<div style="position:absolute;left:14.70px;top:495.24px;width:465.60px;height:0.80px;background:#404040;"></div>
<div style="position:absolute;left:483.00px;top:495.24px;width:541.00px;height:0.80px;background:#404040;"></div>
<div style="position:absolute;left:14.70px;top:505.52px;width:465.60px;height:0.80px;background:#404040;"></div>
<div style="position:absolute;left:483.00px;top:505.52px;width:541.00px;height:0.80px;background:#404040;"></div>
<div style="position:absolute;left:14.70px;top:515.80px;width:465.60px;height:0.80px;background:#404040;"></div>
<div style="position:absolute;left:483.00px;top:515.80px;width:541.00px;height:0.80px;background:#404040;"></div>
<div style="position:absolute;left:51.90px;top:259.50px;width:0.80px;height:184.70px;background:#404040;"></div>
<div style="position:absolute;left:51.70px;top:444.20px;width:1.20px;height:60.80px;background:#a8a8a8;"></div>
<div style="position:absolute;left:142.20px;top:259.50px;width:0.80px;height:245.50px;background:#404040;"></div>
<div style="position:absolute;left:232.20px;top:259.50px;width:0.80px;height:245.50px;background:#404040;"></div>
<div style="position:absolute;left:269.10px;top:259.50px;width:0.80px;height:245.50px;background:#404040;"></div>
<div style="position:absolute;left:306.60px;top:259.50px;width:0.80px;height:245.50px;background:#404040;"></div>
<div style="position:absolute;left:349.00px;top:259.50px;width:0.80px;height:245.50px;background:#404040;"></div>
<div style="position:absolute;left:390.20px;top:259.50px;width:0.80px;height:245.50px;background:#404040;"></div>
<div style="position:absolute;left:480.30px;top:259.50px;width:0.80px;height:245.50px;background:#404040;"></div>
<div style="position:absolute;left:507.90px;top:259.50px;width:0.80px;height:245.50px;background:#404040;"></div>
<div style="position:absolute;left:528.85px;top:259.50px;width:0.80px;height:245.50px;background:#404040;"></div>
<div style="position:absolute;left:549.80px;top:259.50px;width:0.80px;height:245.50px;background:#404040;"></div>
<div style="position:absolute;left:570.75px;top:259.50px;width:0.80px;height:245.50px;background:#404040;"></div>
<div style="position:absolute;left:591.70px;top:259.50px;width:0.80px;height:245.50px;background:#404040;"></div>
<div style="position:absolute;left:612.65px;top:259.50px;width:0.80px;height:245.50px;background:#404040;"></div>
<div style="position:absolute;left:633.60px;top:259.50px;width:0.80px;height:245.50px;background:#404040;"></div>
<div style="position:absolute;left:654.55px;top:259.50px;width:0.80px;height:245.50px;background:#404040;"></div>
<div style="position:absolute;left:675.50px;top:259.50px;width:0.80px;height:245.50px;background:#404040;"></div>
<div style="position:absolute;left:696.45px;top:259.50px;width:0.80px;height:245.50px;background:#404040;"></div>
<div style="position:absolute;left:717.40px;top:259.50px;width:0.80px;height:245.50px;background:#404040;"></div>
<div style="position:absolute;left:738.35px;top:259.50px;width:0.80px;height:245.50px;background:#404040;"></div>
<div style="position:absolute;left:759.30px;top:259.50px;width:0.80px;height:245.50px;background:#404040;"></div>
<div style="position:absolute;left:780.25px;top:259.50px;width:0.80px;height:245.50px;background:#404040;"></div>
<div style="position:absolute;left:801.20px;top:259.50px;width:0.80px;height:245.50px;background:#404040;"></div>
<div style="position:absolute;left:822.15px;top:259.50px;width:0.80px;height:245.50px;background:#404040;"></div>
<div style="position:absolute;left:843.10px;top:259.50px;width:0.80px;height:245.50px;background:#404040;"></div>
<div style="position:absolute;left:864.05px;top:259.50px;width:0.80px;height:245.50px;background:#404040;"></div>
<div style="position:absolute;left:885.00px;top:259.50px;width:0.80px;height:245.50px;background:#404040;"></div>
<div style="position:absolute;left:905.95px;top:259.50px;width:0.80px;height:245.50px;background:#404040;"></div>
<div style="position:absolute;left:926.90px;top:259.50px;width:0.80px;height:245.50px;background:#404040;"></div>
<div style="position:absolute;left:947.85px;top:259.50px;width:0.80px;height:245.50px;background:#404040;"></div>
<div style="position:absolute;left:968.80px;top:259.50px;width:0.80px;height:245.50px;background:#404040;"></div>
<div style="position:absolute;left:989.75px;top:259.50px;width:0.80px;height:245.50px;background:#404040;"></div>
<div style="position:absolute;left:1010.70px;top:259.50px;width:0.80px;height:245.50px;background:#404040;"></div>
<div style="position:absolute;left:1031.65px;top:259.50px;width:0.80px;height:245.50px;background:#404040;"></div>
<div style="position:absolute;left:1052.60px;top:259.50px;width:0.80px;height:245.50px;background:#404040;"></div>
<div style="position:absolute;left:1073.55px;top:259.50px;width:0.80px;height:245.50px;background:#404040;"></div>
<div style="position:absolute;left:1094.50px;top:259.50px;width:0.80px;height:245.50px;background:#404040;"></div>
<div style="position:absolute;left:507.70px;top:248.00px;width:1.20px;height:257.00px;background:#444;"></div>
<div style="position:absolute;left:615.10px;top:83.20px;width:389.70px;height:381.60px;background:#f3f3f3;border:1px solid #bdbdbd;border-radius:6px;box-shadow:0 12px 26px rgba(0,0,0,0.2),0 1px 3px rgba(0,0,0,0.12);"></div>
<svg style="position:absolute;left:623px;top:91px" width="10" height="10" viewBox="0 0 10 10"><rect x="0.5" y="0.5" width="9" height="9" fill="#fff" stroke="#333" stroke-width="0.9"/><path d="M0.5 3 H9.5 M0.5 5.5 H9.5 M0.5 8 H9.5 M3 0.5 V9.5 M6 0.5 V9.5" stroke="#666" stroke-width="0.6"/><rect x="3" y="4.5" width="2" height="1.6" fill="#222"/></svg>
<svg style="position:absolute;left:642.2px;top:93.6px" width="4.6" height="4.6" viewBox="0 0 4.6 4.6"><path d="M0.3 0.6 H4.3 M0.5 2.1 L2.3 3.9 L4.1 2.1" fill="none" stroke="#2a2a2a" stroke-width="0.9"/></svg>
<div style="position:absolute;left:810.00px;top:96.40px;white-space:nowrap;font-size:7.6px;line-height:1;color:#333;font-weight:normal;transform:translate(-50%,-50%) scaleX(0.88);">Braun, Laura - 08.07.2025</div>
<svg style="position:absolute;left:911px;top:92.5px" width="8.5" height="7" viewBox="0 0 8.5 7"><rect x="0.45" y="0.45" width="7.6" height="6.1" rx="0.5" fill="none" stroke="#444" stroke-width="0.9"/><path d="M0.5 2 H8" stroke="#444" stroke-width="0.8"/><path d="M2.5 4.3 H6 M4.3 3.2 L5.6 4.3 L4.3 5.4" fill="none" stroke="#444" stroke-width="0.8"/></svg>
<div style="position:absolute;left:937.70px;top:95.90px;width:6.40px;height:0.90px;background:#3a3a3a;"></div>
<div style="position:absolute;left:963.10px;top:92.90px;width:6.80px;height:6.00px;border:0.9px solid #3a3a3a;border-radius:1px;"></div>
<svg style="position:absolute;left:988.3px;top:92.6px" width="7" height="6.6" viewBox="0 0 7 6.6"><path d="M0.3 0.3 L6.7 6.3 M6.7 0.3 L0.3 6.3" stroke="#3a3a3a" stroke-width="0.9"/></svg>
<div style="position:absolute;left:631.10px;top:117.60px;white-space:nowrap;font-size:7.6px;line-height:1;color:#222;font-weight:bold;transform:translateY(-50%) scaleX(0.88);transform-origin:0 50%;">Schichteinteilung</div>
<div style="position:absolute;left:631.50px;top:123.60px;width:57.00px;height:1.60px;background:#1db39a;border-radius:1px;"></div>
<div style="position:absolute;left:623.10px;top:125.80px;width:374.10px;height:61.20px;background:#fff;border:1px solid #e0e0e0;border-radius:3px;"></div>
<div style="position:absolute;left:679.30px;top:126.50px;width:0.80px;height:60.50px;background:#e6e6e6;"></div>
<svg style="position:absolute;left:636px;top:128px" width="30" height="26" viewBox="0 0 30 26"><path d="M6.4 7 H8.5 V12.9 H21.1 V21.6 H6.4 Z" fill="#3d4044"/><rect x="9" y="15.7" width="9.5" height="3.3" fill="#fff"/><rect x="9.8" y="7" width="5.2" height="4.6" fill="#3d4044"/><rect x="11" y="8.2" width="1.9" height="2.1" fill="#999"/><rect x="16.2" y="4.1" width="8" height="7.8" rx="0.8" fill="#e23b4e"/><path d="M18.2 6.1 L22.2 10 M22.2 6.1 L18.2 10" stroke="#fff" stroke-width="1.1"/></svg>
<div style="position:absolute;left:651.00px;top:161.80px;white-space:nowrap;font-size:7.6px;line-height:1;color:#222;font-weight:normal;transform:translate(-50%,-50%) scaleX(0.87);">Speichern und</div>
<div style="position:absolute;left:651.00px;top:169.40px;white-space:nowrap;font-size:7.6px;line-height:1;color:#222;font-weight:normal;transform:translate(-50%,-50%) scaleX(0.87);">schließen</div>
<div style="position:absolute;left:651.00px;top:183.10px;white-space:nowrap;font-size:7.2px;line-height:1;color:#aaa;font-weight:normal;transform:translate(-50%,-50%) scaleX(0.88);">Speichern</div>
<svg style="position:absolute;left:983px;top:175px" width="9" height="6" viewBox="0 0 9 6"><path d="M1 5 L4.5 1.5 L8 5" fill="none" stroke="#333" stroke-width="1"/></svg>
<div style="position:absolute;left:620.00px;top:199.60px;white-space:nowrap;font-size:7.4px;line-height:1;color:#333;font-weight:normal;transform:translateY(-50%) scaleX(0.88);transform-origin:0 50%;">Schicht</div>
<div style="position:absolute;left:682.00px;top:192.80px;width:97.00px;height:12.30px;background:#fff;border-radius:2px;border-bottom:1.6px solid #1db39a;"></div>
<div style="position:absolute;left:684.50px;top:199.60px;white-space:nowrap;font-size:7.4px;line-height:1;color:#222;font-weight:normal;transform:translateY(-50%) scaleX(0.88);transform-origin:0 50%;">Frühschicht</div>
<svg style="position:absolute;left:768.5px;top:197px" width="8" height="5" viewBox="0 0 8 5"><path d="M1 1 L4 4 L7 1" fill="none" stroke="#333" stroke-width="0.9"/></svg>
<div style="position:absolute;left:781.60px;top:193.30px;width:9.60px;height:9.80px;background:#fff;border:1px solid #ddd;border-radius:2px;"></div>
<div style="position:absolute;left:794.00px;top:198.80px;white-space:nowrap;font-size:7.4px;line-height:1;color:#333;font-weight:normal;transform:translateY(-50%) scaleX(0.88);transform-origin:0 50%;">Zusatz</div>
<div style="position:absolute;left:827.80px;top:199.60px;white-space:nowrap;font-size:7.4px;line-height:1;color:#333;font-weight:normal;transform:translateY(-50%) scaleX(0.88);transform-origin:0 50%;">Funktion</div>
<div style="position:absolute;left:890.00px;top:192.80px;width:109.30px;height:12.30px;background:#fff;border-radius:2px;box-shadow:0 0.6px 0 #cfcfcf;"></div>
<div style="position:absolute;left:892.50px;top:199.60px;white-space:nowrap;font-size:7.4px;line-height:1;color:#222;font-weight:normal;transform:translateY(-50%) scaleX(0.88);transform-origin:0 50%;">Produktionsmechaniker</div>
<svg style="position:absolute;left:988.5px;top:197px" width="8" height="5" viewBox="0 0 8 5"><path d="M1 1 L4 4 L7 1" fill="none" stroke="#333" stroke-width="0.9"/></svg>
<div style="position:absolute;left:620.00px;top:229.00px;white-space:nowrap;font-size:7.4px;line-height:1;color:#333;font-weight:normal;transform:translateY(-50%) scaleX(0.88);transform-origin:0 50%;">Abwesenheit</div>
<div style="position:absolute;left:682.00px;top:223.00px;width:317.30px;height:11.60px;background:#fff;border-radius:2px;box-shadow:0 0.6px 0 #cfcfcf;"></div>
<svg style="position:absolute;left:988.5px;top:226.5px" width="8" height="5" viewBox="0 0 8 5"><path d="M1 1 L4 4 L7 1" fill="none" stroke="#333" stroke-width="0.9"/></svg>
<div style="position:absolute;left:620.00px;top:270.60px;white-space:nowrap;font-size:7.4px;line-height:1;color:#333;font-weight:normal;transform:translateY(-50%) scaleX(0.88);transform-origin:0 50%;">Bemerkung</div>
<div style="position:absolute;left:682.30px;top:250.90px;width:317.00px;height:38.30px;background:#fff;border-radius:2px;box-shadow:0 0.6px 0 #cfcfcf;"></div>
<div style="position:absolute;left:988.00px;top:252.00px;width:10.00px;height:36.00px;background:#f3f3f3;"></div>
<div style="position:absolute;left:628.30px;top:309.60px;white-space:nowrap;font-size:7.4px;line-height:1;color:#333;font-weight:normal;transform:translateY(-50%) scaleX(0.88);transform-origin:0 50%;">Arbeitsplatzzuweisung</div>
<div style="position:absolute;left:820.80px;top:309.60px;white-space:nowrap;font-size:7.4px;line-height:1;color:#333;font-weight:normal;transform:translateY(-50%) scaleX(0.88);transform-origin:0 50%;">Ausgewählt</div>
<div style="position:absolute;left:628.60px;top:329.00px;width:170.80px;height:92.50px;background:#fff;border-radius:2px;box-shadow:0 0.6px 0 #cfcfcf;"></div>
<div style="position:absolute;left:630.00px;top:330.40px;width:167.50px;height:15.50px;background:#e6e6e6;border-radius:2px;"></div>
<div style="position:absolute;left:635.50px;top:338.90px;white-space:nowrap;font-size:7.4px;line-height:1;color:#222;font-weight:normal;transform:translateY(-50%) scaleX(0.88);transform-origin:0 50%;">A17 - Montagelinie 1</div>
<div style="position:absolute;left:635.50px;top:354.60px;white-space:nowrap;font-size:7.4px;line-height:1;color:#222;font-weight:normal;transform:translateY(-50%) scaleX(0.88);transform-origin:0 50%;">A18 - Roboterzelle</div>
<div style="position:absolute;left:803.30px;top:329.00px;width:13.40px;height:27.00px;background:#fff;border-radius:2px;box-shadow:0 0.6px 0 #d5d5d5;"></div>
<div style="position:absolute;left:810.00px;top:343.10px;white-space:nowrap;font-size:7px;line-height:1;color:#333;font-weight:normal;transform:translate(-50%,-50%) scaleX(1.0);">&gt;</div>
<div style="position:absolute;left:803.30px;top:361.60px;width:13.40px;height:27.40px;background:#fff;border-radius:2px;box-shadow:0 0.6px 0 #d5d5d5;"></div>
<div style="position:absolute;left:810.00px;top:375.90px;white-space:nowrap;font-size:7px;line-height:1;color:#333;font-weight:normal;transform:translate(-50%,-50%) scaleX(1.0);">&lt;</div>
<div style="position:absolute;left:803.30px;top:394.30px;width:13.40px;height:26.70px;background:#fff;border-radius:2px;box-shadow:0 0.6px 0 #d5d5d5;"></div>
<div style="position:absolute;left:810.00px;top:408.25px;white-space:nowrap;font-size:7px;line-height:1;color:#333;font-weight:normal;transform:translate(-50%,-50%) scaleX(1.0);">&lt;&lt;</div>
<div style="position:absolute;left:821.00px;top:329.00px;width:170.30px;height:92.20px;background:#fff;border-radius:2px;box-shadow:0 0.6px 0 #cfcfcf;"></div>
<div style="position:absolute;left:820.80px;top:316.20px;width:65.20px;height:11.80px;background:#ececec;border-radius:2px;"></div>
<div style="position:absolute;left:870.00px;top:323.10px;white-space:nowrap;font-size:7.2px;line-height:1;color:#bbb;font-weight:normal;transform:translate(-100%,-50%) scaleX(0.88);transform-origin:100% 50%;">,00</div>
<svg style="position:absolute;left:873px;top:317.5px" width="6" height="10" viewBox="0 0 6 10"><path d="M0.8 3.5 L3 1.2 L5.2 3.5 M0.8 6.5 L3 8.8 L5.2 6.5" fill="none" stroke="#bbb" stroke-width="0.8"/></svg>
<div style="position:absolute;left:890.70px;top:316.80px;width:13.30px;height:6.50px;background:#fff;border-radius:1.5px;box-shadow:0 0.5px 0 #d0d0d0;"></div>
<div style="position:absolute;left:897.30px;top:320.40px;white-space:nowrap;font-size:6.5px;line-height:1;color:#333;font-weight:normal;transform:translate(-50%,-50%) scaleX(1.0);">&lt;</div>
<div style="position:absolute;left:908.00px;top:316.80px;width:12.80px;height:6.50px;background:#fff;border-radius:1.5px;box-shadow:0 0.5px 0 #d0d0d0;"></div>
<div style="position:absolute;left:914.40px;top:320.40px;white-space:nowrap;font-size:6.5px;line-height:1;color:#333;font-weight:normal;transform:translate(-50%,-50%) scaleX(1.0);">&gt;</div>
<div style="position:absolute;left:925.20px;top:306.00px;width:9.50px;height:9.80px;background:#1d9d7a;border-radius:2px;"></div>
<svg style="position:absolute;left:926.5px;top:307.5px" width="7" height="7" viewBox="0 0 7 7"><path d="M0.8 3.6 L2.7 5.5 L6.3 1.5" fill="none" stroke="#fff" stroke-width="1"/></svg>
<div style="position:absolute;left:938.00px;top:311.80px;white-space:nowrap;font-size:7.4px;line-height:1;color:#333;font-weight:normal;transform:translateY(-50%) scaleX(0.88);transform-origin:0 50%;">Verknüpfe Std.</div>
<div style="position:absolute;left:925.80px;top:317.00px;width:65.20px;height:11.20px;background:#fff;"></div>
<div style="position:absolute;left:964.50px;top:323.20px;white-space:nowrap;font-size:7.4px;line-height:1;color:#222;font-weight:normal;transform:translate(-100%,-50%) scaleX(0.88);transform-origin:100% 50%;">7,00</div>
<svg style="position:absolute;left:968px;top:318px" width="6" height="10" viewBox="0 0 6 10"><path d="M0.8 3.5 L3 1.2 L5.2 3.5 M0.8 6.5 L3 8.8 L5.2 6.5" fill="none" stroke="#444" stroke-width="0.8"/></svg>
<svg style="position:absolute;left:979px;top:317px" width="12" height="11" viewBox="0 0 12 11"><rect x="0.5" y="0.5" width="8" height="9.5" fill="#fff" stroke="#666" stroke-width="0.8"/><path d="M3 0.5 V10" stroke="#666" stroke-width="0.7"/><circle cx="8" cy="7" r="2" fill="none" stroke="#2e8fd8" stroke-width="0.9"/><path d="M9.5 8.5 L11.5 10.5" stroke="#2e8fd8" stroke-width="1"/></svg>
<div style="position:absolute;left:616.10px;top:446.00px;width:387.70px;height:0.80px;background:#dcdcdc;"></div>
<div style="position:absolute;left:616.10px;top:446.80px;width:387.70px;height:17.00px;background:#f9f9f9;border-radius:0 0 7px 7px;"></div>
<svg style="position:absolute;left:997.5px;top:457.8px" width="5" height="5" viewBox="0 0 5 5"><circle cx="1" cy="1" r="0.5" fill="#888"/><circle cx="3.6" cy="1" r="0.5" fill="#888"/><circle cx="1" cy="3.6" r="0.5" fill="#888"/><circle cx="3.6" cy="3.6" r="0.5" fill="#888"/></svg>
</div></body></html>
